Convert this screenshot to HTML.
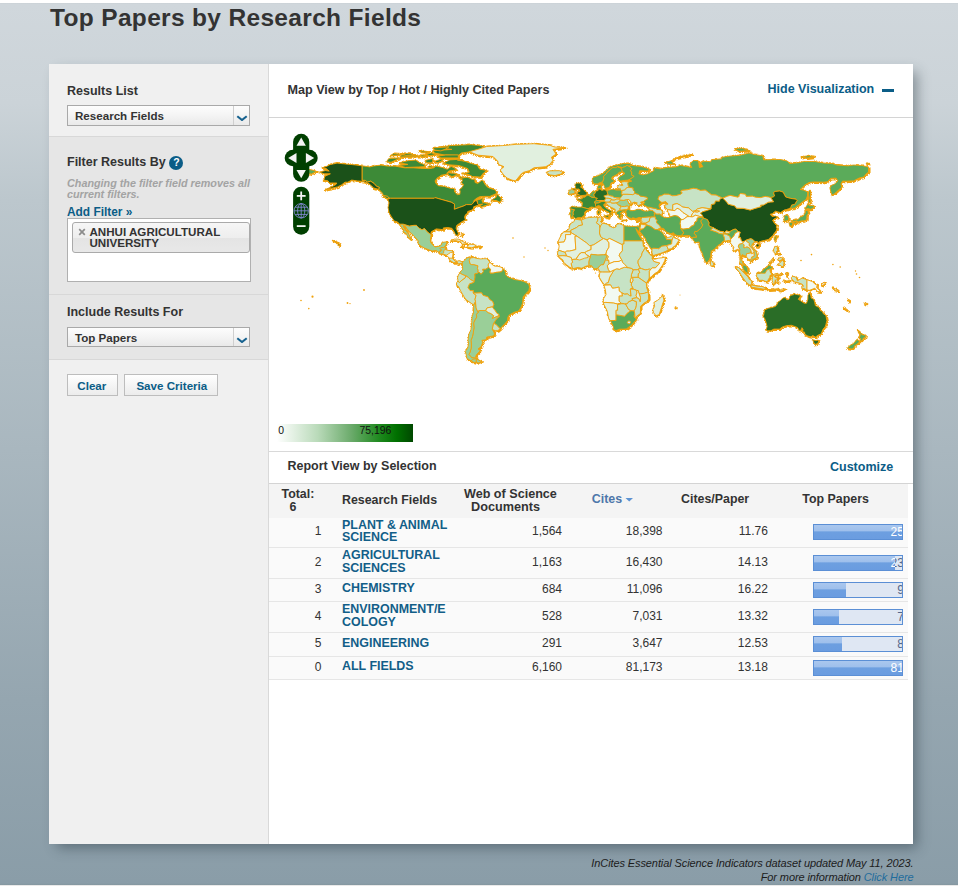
<!DOCTYPE html>
<html><head><meta charset="utf-8">
<style>
*{box-sizing:border-box;margin:0;padding:0}
html,body{width:958px;height:886px;overflow:hidden;background:#fff}
body{font-family:"Liberation Sans",sans-serif;color:#333;position:relative}
.t{position:absolute;white-space:nowrap}
.r{position:absolute}
</style></head><body>
<div class="r" style="left:0;top:3px;width:958px;height:882px;background:linear-gradient(to bottom,#c9d0d5 0px,#d0d7dc 1px,#cbd3d8 100px,#bcc7cd 197px,#a9b7bf 447px,#95a6b0 697px,#8a9da8 880px,#84979f 882px)"></div>
<div class="r" style="left:0;top:885px;width:958px;height:1px;background:#e9e9e9"></div>
<div class="t" style="left:50.00px;top:3.11px;font-size:24.5px;line-height:30px;font-weight:bold;color:#333;letter-spacing:0.33px">Top Papers by Research Fields</div>
<div class="r" style="left:49px;top:64px;width:864px;height:780px;background:#fff;box-shadow:6px 6px 12px -2px rgba(30,45,55,.42)"></div>
<div class="r" style="left:49px;top:64px;width:219px;height:780px;background:#f0f0f0"></div>
<div class="r" style="left:268px;top:64px;width:1px;height:780px;background:#d9d9d9"></div>
<div class="r" style="left:49px;top:136px;width:219px;height:1px;background:#d8d8d8"></div>
<div class="r" style="left:49px;top:137px;width:219px;height:157px;background:#e6e6e6"></div>
<div class="r" style="left:49px;top:294px;width:219px;height:1px;background:#d8d8d8"></div>
<div class="r" style="left:49px;top:295px;width:219px;height:64px;background:#e6e6e6"></div>
<div class="r" style="left:49px;top:359px;width:219px;height:1px;background:#d8d8d8"></div>
<div class="t" style="left:67.00px;top:82.67px;font-size:12.5px;line-height:16px;font-weight:bold;color:#333">Results List</div>
<div class="r" style="left:67px;top:105px;width:183px;height:21px;background:linear-gradient(#fdfdfd,#f4f4f4 50%,#e9e9e9);border:1px solid #a9a9a9"></div>
<div class="r" style="left:233px;top:106px;width:1px;height:19px;background:#cfcfcf"></div>
<svg class="r" style="left:236px;top:113.0px" width="12" height="8" viewBox="0 0 12 8"><path d="M1.3 3.2 L6 7 L10.7 3.2" fill="none" stroke="#17628f" stroke-width="2.1"/></svg>
<div class="t" style="left:75.00px;top:108.08px;font-size:11.6px;line-height:16px;font-weight:bold;color:#333">Research Fields</div>
<div class="t" style="left:67.00px;top:153.97px;font-size:12.5px;line-height:16px;font-weight:bold;color:#333">Filter Results By</div>
<div class="r" style="left:169px;top:156px;width:14px;height:14px;border-radius:50%;background:#0b5d87"></div>
<div class="t" style="left:173.20px;top:154.26px;font-size:10.5px;line-height:16px;font-weight:bold;color:#fff">?</div>
<div class="t" style="left:67.00px;top:175.06px;font-size:10.8px;line-height:16px;font-weight:bold;font-style:italic;color:#a3a3a3">Changing the filter field removes all</div>
<div class="t" style="left:67.00px;top:186.46px;font-size:10.8px;line-height:16px;font-weight:bold;font-style:italic;color:#a3a3a3">current filters.</div>
<div class="t" style="left:67.00px;top:204.28px;font-size:11.9px;line-height:16px;font-weight:bold;color:#0b5d87">Add Filter &raquo;</div>
<div class="r" style="left:67px;top:218px;width:184px;height:64px;background:#fff;border:1px solid #b0b0b0"></div>
<div class="r" style="left:72px;top:222px;width:178px;height:31px;background:linear-gradient(#f6f6f6,#eeeeee 50%,#e4e4e4 52%,#e8e8e8);border:1px solid #aaa;border-radius:3px"></div>
<svg class="r" style="left:78px;top:227.5px" width="8" height="8" viewBox="0 0 8 8"><path d="M1.2 1.2 L6.8 6.8 M6.8 1.2 L1.2 6.8" stroke="#8c8c8c" stroke-width="1.7"/></svg>
<div class="t" style="left:89.50px;top:223.68px;font-size:11.6px;line-height:16px;font-weight:bold;color:#333">ANHUI AGRICULTURAL</div>
<div class="t" style="left:89.50px;top:234.98px;font-size:11.6px;line-height:16px;font-weight:bold;color:#333">UNIVERSITY</div>
<div class="t" style="left:67.00px;top:304.47px;font-size:12.5px;line-height:16px;font-weight:bold;color:#333">Include Results For</div>
<div class="r" style="left:67px;top:327px;width:183px;height:20px;background:linear-gradient(#fdfdfd,#f4f4f4 50%,#e9e9e9);border:1px solid #a9a9a9"></div>
<div class="r" style="left:233px;top:328px;width:1px;height:18px;background:#cfcfcf"></div>
<svg class="r" style="left:236px;top:334.5px" width="12" height="8" viewBox="0 0 12 8"><path d="M1.3 3.2 L6 7 L10.7 3.2" fill="none" stroke="#17628f" stroke-width="2.1"/></svg>
<div class="t" style="left:75.00px;top:329.88px;font-size:11.6px;line-height:16px;font-weight:bold;color:#333">Top Papers</div>
<div class="r" style="left:67px;top:374px;width:51px;height:22px;background:linear-gradient(#ffffff,#f3f3f3 60%,#ececec);border:1px solid #bdbdbd"></div>
<div class="t" style="left:77.30px;top:377.68px;font-size:11.6px;line-height:16px;font-weight:bold;color:#0b5d87">Clear</div>
<div class="r" style="left:124px;top:374px;width:94px;height:22px;background:linear-gradient(#ffffff,#f3f3f3 60%,#ececec);border:1px solid #bdbdbd"></div>
<div class="t" style="left:136.40px;top:377.68px;font-size:11.6px;line-height:16px;font-weight:bold;color:#0b5d87">Save Criteria</div>
<div class="t" style="left:287.50px;top:81.63px;font-size:12.6px;line-height:16px;font-weight:bold;color:#333">Map View by Top / Hot / Highly Cited Papers</div>
<div class="t" style="left:767.50px;top:81.37px;font-size:12.5px;line-height:16px;font-weight:bold;color:#0b5d87">Hide Visualization</div>
<div class="r" style="left:882px;top:89.2px;width:12px;height:2.5px;background:#0b5d87"></div>
<div class="r" style="left:269px;top:117px;width:644px;height:1px;background:#d4d4d4"></div>
<svg class="r" style="left:269px;top:118px" width="644" height="333" viewBox="269 118 644 333">
<defs><filter id="jag" x="-2%" y="-2%" width="104%" height="104%"><feTurbulence type="turbulence" baseFrequency="0.9" numOctaves="2" seed="3"/><feDisplacementMap in="SourceGraphic" scale="2.2" xChannelSelector="R" yChannelSelector="G"/></filter></defs>
<path fill="#f0a20c" stroke="#f0a20c" stroke-width="2.0" stroke-linejoin="round" filter="url(#jag)" d="M362.0 165.8L369.9 166.9L373.8 165.9L380.9 165.1L388.0 166.1L395.1 166.1L404.6 167.8L413.3 167.8L420.4 168.3L429.1 168.6L433.8 167.8L435.9 165.9L442.5 167.5L447.2 169.2L451.2 166.4L455.1 168.3L456.2 169.9L448.8 171.0L446.4 174.3L441.4 175.2L437.0 178.2L435.1 180.9L435.7 183.0L438.2 185.7L444.2 186.4L450.4 188.3L454.6 188.7L454.6 192.0L457.3 194.6L459.8 194.3L460.2 191.2L459.5 189.6L462.0 187.5L463.6 184.7L461.4 182.8L462.4 180.4L461.1 177.3L467.7 177.3L472.1 179.3L474.8 179.3L475.1 182.5L477.7 183.4L481.6 180.4L482.9 180.6L484.8 184.1L487.5 187.2L491.4 188.8L494.1 189.4L496.0 191.0L496.6 193.4L494.2 194.5L489.8 196.4L483.5 196.4L479.6 196.7L475.6 198.9L473.4 201.4L482.7 198.3L483.2 199.1L481.9 200.2L482.7 202.5L487.5 203.5L489.8 203.0L488.2 204.6L481.1 207.0L480.0 205.5L482.7 204.1L478.8 204.6L477.5 203.5L477.2 201.0L475.3 200.8L474.0 201.9L471.7 204.6L466.3 204.6L463.8 205.9L459.8 207.3L454.3 209.3L454.5 204.1L451.2 202.2L443.1 199.9L434.9 197.6L434.3 198.3L390.4 198.3L388.0 197.5L387.2 196.7L383.3 195.6L382.5 193.2L379.4 189.9L378.4 189.3L379.4 187.4L376.5 186.3L374.0 183.4L370.7 181.2L367.5 182.2L365.2 180.4L362.0 180.4ZM490.9 200.5L496.1 197.2L496.9 194.2L500.9 197.8L501.3 200.5L499.6 201.9L496.1 200.5ZM487.0 170.5L483.5 173.0L480.4 177.1L472.5 176.5L467.7 174.0L462.2 173.5L469.3 172.2L467.7 168.6L463.8 167.2L458.9 165.5L448.8 164.8L443.3 163.2L449.6 159.9L458.3 159.3L463.8 160.9L471.7 163.6L477.2 165.0L479.6 169.1ZM424.3 166.7L418.8 167.0L405.4 167.5L398.6 165.5L407.8 164.4L399.1 162.8L407.8 160.7L415.7 160.1L419.6 162.8L425.1 164.8ZM484.3 146.2L470.9 144.6L450.4 145.6L437.7 147.5L442.5 148.4L451.9 149.4L433.0 150.6L434.6 153.1L444.1 154.9L458.3 155.4L461.4 153.0L471.4 151.6L480.4 149.0ZM400.2 157.9L391.0 162.3L386.5 161.7L388.8 158.4ZM458.3 157.9L440.9 157.9L437.7 156.1L445.6 155.0L458.3 154.9ZM420.4 156.5L399.9 156.9L401.5 154.9L417.2 155.4ZM431.4 158.8L425.1 160.4L426.7 162.8L432.2 162.8L433.0 160.1ZM442.5 158.8L434.6 161.2L437.0 162.8L441.7 161.2ZM458.3 174.9L453.5 173.3L447.2 172.7L448.8 175.2L451.9 176.5ZM429.1 151.7L418.8 150.5L422.0 152.2L427.0 152.8ZM414.1 154.7L409.3 153.3L401.5 153.6L406.2 155.4ZM386.5 198.3L389.6 199.2L387.6 196.2L382.5 195.4ZM448.8 147.0L433.0 147.8L434.6 150.1L440.9 150.9L445.6 149.0ZM433.0 166.4L429.1 165.8L428.3 167.3L431.4 167.8ZM398.3 154.9L390.4 155.5L393.6 153.5L400.7 154.1ZM457.5 160.2L463.8 161.0L461.4 159.5ZM436.2 154.4L429.9 155.7L425.9 154.4L431.4 152.8ZM425.1 155.4L420.4 154.7L422.0 156.8L426.7 156.5ZM465.4 177.4L458.3 176.8L460.6 178.4ZM387.7 199.2L390.4 198.3L434.3 198.3L434.9 197.6L443.1 199.9L451.2 202.2L454.5 204.1L454.3 209.3L459.8 207.3L463.8 205.9L466.3 204.6L471.7 204.6L474.0 201.9L475.3 200.8L477.2 201.0L477.5 203.5L478.8 204.9L473.7 206.8L473.1 209.3L471.0 210.4L467.7 211.5L467.4 213.3L465.4 214.8L464.6 217.2L465.4 219.9L461.6 221.9L456.7 225.4L456.1 228.3L458.3 233.3L457.6 235.8L455.4 234.6L454.2 231.7L451.9 228.3L448.0 227.6L443.3 227.9L443.4 229.8L440.9 229.4L436.2 228.9L431.1 231.9L431.1 234.7L427.5 232.2L424.5 228.6L422.0 229.8L419.3 228.3L416.4 225.4L413.8 225.4L409.3 226.2L403.3 224.3L399.7 224.3L397.5 221.9L394.2 221.0L391.2 216.4L389.1 212.8L388.5 209.5L388.0 207.7L389.0 202.7ZM362.0 165.8L362.0 180.4L365.2 180.4L367.5 182.2L370.7 181.2L374.0 183.4L376.5 186.3L379.4 187.4L378.4 189.3L373.8 188.0L369.1 183.8L363.6 181.4L357.3 180.9L351.7 180.1L347.8 182.2L345.0 182.2L341.5 184.9L337.5 186.9L330.4 188.5L326.5 189.3L324.9 189.8L332.0 186.6L336.0 184.4L336.8 183.0L329.0 183.0L328.1 180.9L323.8 180.1L324.9 176.2L330.4 173.8L324.1 173.8L319.4 172.1L325.4 170.5L329.2 171.1L326.2 168.6L321.8 167.8L326.0 166.7L329.7 164.7L337.1 163.1L344.6 163.9L354.1 164.8ZM338.5 243.7L340.2 244.8L338.8 245.8L338.2 244.5ZM337.5 242.6L336.3 242.1L334.9 241.5L332.8 240.6L335.2 242.0ZM469.3 151.7L480.4 148.6L486.7 146.5L502.4 145.6L516.6 144.3L534.0 143.7L549.8 145.3L554.5 147.0L565.6 147.5L552.9 149.4L556.1 154.1L551.4 157.2L552.9 160.4L549.8 164.4L545.8 166.7L534.0 167.8L529.3 170.7L523.7 172.2L521.4 173.8L517.4 178.6L515.4 180.9L511.9 180.1L507.2 178.1L504.0 175.4L501.7 172.2L500.1 169.9L504.0 166.7L498.5 164.4L497.7 161.2L493.0 156.5L478.0 155.2ZM546.6 172.2L549.8 170.8L559.3 170.7L561.6 171.8L563.0 172.9L560.8 174.1L555.0 175.6L549.8 174.9ZM399.7 224.3L403.3 224.3L409.3 226.2L413.8 225.4L416.4 225.4L419.3 228.3L422.0 229.8L424.5 228.6L427.5 232.2L431.1 234.7L430.3 240.9L431.1 243.3L433.8 245.9L435.4 246.9L439.3 246.2L441.7 244.4L441.8 242.5L447.1 241.7L446.4 244.0L445.2 246.4L443.9 247.5L441.1 247.5L440.3 248.5L441.7 250.2L439.0 251.6L439.0 252.7L436.2 250.4L432.2 251.0L429.1 249.9L424.3 248.0L420.4 245.8L418.0 243.3L418.3 241.0L416.4 238.7L413.3 235.4L409.3 231.6L406.7 228.4L405.4 226.2L403.3 225.4L403.3 226.7L405.4 230.0L407.3 232.5L408.9 234.6L410.4 237.6L411.1 239.5L407.8 236.8L406.2 233.5L402.9 231.7L404.3 230.3L401.5 227.5L400.5 225.3ZM439.0 252.7L441.7 250.2L440.3 248.5L441.1 247.5L443.9 247.5L445.2 246.4L445.3 249.6L448.8 250.5L451.9 250.7L453.2 252.1L452.7 255.9L452.4 258.2L453.5 259.8L455.9 261.7L459.0 260.6L462.4 261.9L462.4 263.6L460.9 263.3L458.3 264.1L457.6 262.5L453.7 262.7L449.3 260.0L449.3 258.1L446.4 255.2L443.7 254.3L440.3 253.7ZM446.4 255.2L448.8 253.7L450.4 252.6L453.2 252.1L452.7 255.9L452.4 258.2L449.3 258.1ZM439.0 252.7L441.7 250.2L440.3 248.5L441.1 247.5L443.9 247.5L445.2 246.4L445.3 249.6L443.7 250.5L443.7 252.9L442.3 254.0L440.3 253.7ZM450.4 241.0L454.3 239.1L458.3 239.1L462.7 241.5L467.4 243.7L461.9 244.2L460.6 241.7L455.4 240.6L451.9 241.0ZM466.9 246.6L469.6 244.2L474.0 244.5L476.7 246.2L474.0 246.9L471.7 247.8L467.1 247.0ZM460.9 246.6L464.1 246.9L463.0 247.5ZM478.5 246.4L481.0 246.6L480.4 247.2L478.5 247.2ZM461.4 233.3L463.0 233.8L462.2 236.2L460.9 235.4ZM462.4 265.2L462.4 263.6L462.4 261.9L464.6 260.6L465.4 258.9L467.4 257.8L470.6 257.0L472.0 256.0L471.0 257.5L470.3 258.1L469.3 260.6L470.1 263.8L471.7 264.6L473.9 264.6L478.0 265.8L477.4 268.5L478.3 270.2L477.5 271.5L478.8 272.1L477.8 273.2L474.8 273.9L475.0 277.2L474.0 282.2L473.7 281.3L470.3 279.4L468.4 277.5L465.7 275.8L463.0 274.8L460.5 273.5L459.5 273.4L460.5 271.7L462.7 269.3ZM470.3 258.1L471.5 257.8L474.0 257.5L476.7 258.4L480.4 258.9L483.5 258.7L486.7 258.7L488.2 260.0L489.8 262.2L488.7 263.8L488.2 264.9L488.6 267.4L485.6 269.3L482.7 269.3L483.5 271.7L481.1 274.3L478.8 272.1L477.5 271.5L478.3 270.2L477.4 268.5L478.0 265.8L473.9 264.6L471.7 264.6L470.1 263.8L469.3 260.6ZM489.8 262.2L492.2 264.6L494.6 266.1L497.7 266.3L500.1 266.8L502.4 268.0L503.1 269.0L501.7 271.7L499.3 272.1L496.1 272.4L493.0 273.2L490.1 273.2L489.8 272.0L490.6 269.3L488.6 267.4L488.2 264.9L488.7 263.8ZM467.9 287.4L470.1 290.6L473.3 290.6L473.1 293.0L476.1 293.1L481.5 292.8L483.0 295.3L488.2 296.9L489.5 299.4L492.5 301.3L493.8 304.3L492.7 307.6L495.3 310.8L496.9 313.3L498.8 314.3L499.3 316.6L496.6 318.8L493.6 323.3L496.1 324.5L500.1 328.8L502.1 326.4L504.8 323.7L507.5 320.6L507.8 317.4L509.1 315.1L514.3 312.2L518.5 311.1L520.6 307.9L522.6 303.2L523.1 296.9L525.8 293.7L528.8 290.6L529.6 287.0L528.5 283.8L523.7 281.4L519.0 280.2L514.3 279.5L508.0 276.9L505.6 274.8L505.6 272.8L504.0 269.3L503.1 269.0L501.7 271.7L499.3 272.1L496.1 272.4L493.0 273.2L490.1 273.2L489.8 272.0L490.6 269.3L488.6 267.4L485.6 269.3L482.7 269.3L483.5 271.7L481.1 274.3L478.8 272.1L477.8 273.2L474.8 273.9L475.0 277.2L474.0 282.2L469.5 283.8ZM457.5 278.0L458.3 275.1L459.5 273.4L460.5 273.5L463.0 274.8L465.7 275.8L465.2 278.0L460.9 281.0L459.4 282.7L457.9 281.0L457.9 279.5ZM456.4 285.1L456.7 282.4L457.9 281.0L459.4 282.7L460.9 281.0L465.2 278.0L465.7 275.8L468.4 277.5L470.3 279.4L473.7 281.3L474.0 282.2L469.5 283.8L467.9 287.4L470.1 290.6L473.3 290.6L473.1 293.0L476.1 295.3L475.0 299.3L475.5 301.2L473.7 304.8L471.8 303.7L466.1 299.7L464.1 296.9L460.6 290.9L458.6 286.6ZM476.1 293.1L481.5 292.8L483.0 295.3L488.2 296.9L489.5 299.4L492.5 301.3L493.8 304.3L492.7 306.8L487.1 307.9L485.7 310.6L479.9 310.5L477.5 311.6L475.9 307.9L475.5 301.2L475.0 299.3L476.1 295.3L473.1 293.0ZM492.7 306.8L492.7 307.6L495.3 310.8L496.9 313.3L498.8 314.3L498.3 316.0L492.2 318.5L493.6 315.7L490.6 313.5L488.2 312.8L485.7 310.6L487.1 307.9ZM493.6 323.3L496.1 324.5L500.1 328.8L497.7 330.7L495.3 330.7L492.3 329.4L492.7 326.9L493.3 323.7ZM479.9 310.5L485.7 310.6L488.2 312.8L490.6 313.5L493.6 315.7L492.2 318.5L498.3 316.0L499.3 316.6L496.6 318.8L493.6 323.3L493.3 323.7L492.7 326.9L492.3 329.4L493.9 332.1L494.6 334.0L493.4 335.9L486.7 337.1L486.2 339.7L481.9 340.3L482.7 342.3L481.1 346.6L478.0 349.0L480.4 350.6L476.4 354.7L475.6 357.0L476.6 358.3L471.7 357.7L470.4 356.1L468.8 354.5L470.1 352.1L471.2 348.2L471.4 345.0L471.0 340.3L472.5 336.4L473.3 332.4L474.0 327.7L473.6 322.9L475.0 319.8L476.7 317.1L476.4 314.3L478.5 311.9L477.5 311.6ZM476.2 358.6L481.8 361.9L478.3 362.9L476.2 362.2ZM473.7 304.8L475.5 303.2L475.9 307.9L477.5 311.6L478.5 311.9L476.4 314.3L476.7 317.1L475.0 319.8L473.6 322.9L474.0 327.7L473.3 332.4L472.5 336.4L471.0 340.3L471.4 345.0L471.2 348.2L470.1 352.1L468.8 354.5L470.4 356.1L471.7 357.7L476.6 358.3L473.3 360.0L470.9 360.8L466.9 358.4L466.1 354.5L465.4 351.3L467.7 348.2L468.5 343.5L468.0 340.3L468.7 334.5L470.9 329.6L471.7 322.9L472.0 316.6L473.4 312.7ZM476.2 362.2L474.0 362.4L470.9 360.8L473.3 359.2L476.2 358.6ZM592.4 178.6L592.4 180.9L593.2 182.8L594.8 183.9L597.4 183.9L600.3 182.5L601.5 182.2L602.3 182.7L603.4 180.1L603.9 178.6L603.6 176.2L606.4 173.8L607.4 171.9L609.0 171.0L610.5 169.1L612.9 167.5L615.9 167.7L617.6 166.7L619.8 167.2L622.4 167.5L625.1 166.7L627.1 165.3L629.5 166.7L630.3 165.6L633.4 165.5L629.5 163.6L623.2 163.4L617.6 164.8L612.9 165.9L609.0 167.5L607.4 169.1L605.0 171.5L603.8 173.0L601.1 174.1L597.9 175.7L593.2 177.4ZM602.3 182.7L603.4 184.1L604.5 186.6L604.9 188.2L607.1 188.0L609.7 186.9L610.5 184.9L610.9 183.1L613.7 182.0L614.2 180.4L611.6 178.9L612.1 177.0L615.0 175.6L617.6 174.1L619.2 172.2L622.7 171.8L621.7 169.9L621.6 168.3L617.6 166.7L615.9 167.7L612.9 167.5L610.5 169.1L609.0 171.0L607.4 171.9L606.4 173.8L603.6 176.2L603.9 178.6L603.4 180.1ZM622.7 171.8L624.6 172.9L624.4 174.1L622.1 175.2L619.2 176.8L618.3 178.7L618.4 180.1L620.8 181.1L624.7 180.4L628.4 180.1L631.1 178.6L634.2 176.3L631.5 174.9L631.8 172.9L630.7 170.2L632.0 168.8L629.8 166.9L629.9 165.5L629.5 166.7L627.1 165.3L625.1 166.7L622.4 167.5L619.8 167.2L617.6 166.7L621.6 168.3L621.7 169.9ZM597.3 188.0L598.1 185.5L601.1 184.5L601.1 186.4L601.5 187.2L600.1 188.8L599.3 189.1L598.1 189.0ZM575.5 196.7L579.8 195.8L586.6 195.0L587.2 192.4L585.0 191.3L583.7 189.6L582.0 187.9L580.6 187.2L581.7 184.9L579.5 183.1L576.6 183.1L574.7 184.9L575.7 186.8L575.0 187.7L576.6 189.1L579.0 189.0L579.8 190.5L579.8 191.5L577.4 191.7L577.9 192.9L576.3 193.9L579.3 194.5L577.4 195.0ZM575.0 190.2L575.8 189.4L574.9 188.5L573.0 188.7L572.2 189.8L573.5 190.1ZM575.0 193.2L574.7 191.2L575.0 190.2L573.5 190.1L572.2 189.8L573.0 188.7L571.4 188.5L570.8 190.1L568.7 190.1L569.0 191.5L568.4 193.4L569.5 194.2L571.9 193.9ZM577.1 198.9L582.1 198.8L582.6 197.2L584.8 197.2L587.0 195.3L588.4 195.0L591.1 196.9L593.7 197.5L594.6 197.5L597.4 198.3L596.3 200.5L594.0 202.5L595.5 203.2L595.5 205.9L596.3 206.5L594.8 207.6L591.6 207.0L589.4 207.7L589.5 208.7L586.9 208.5L581.7 207.1L582.6 203.0L581.0 201.3L577.4 200.0ZM598.1 207.9L599.5 208.1L599.2 210.3L598.2 209.5ZM569.8 207.7L571.9 206.6L577.4 207.1L581.7 207.1L586.9 208.5L589.5 208.7L589.5 209.5L585.8 210.9L584.5 212.6L584.8 214.4L583.4 216.3L581.2 217.7L577.6 217.7L575.7 218.8L574.2 217.4L572.8 216.9L572.7 215.3L573.5 214.1L572.7 213.1L573.6 210.9L574.4 209.8L571.6 209.2L570.5 209.3ZM570.5 209.3L571.6 209.2L574.4 209.8L573.6 210.9L572.7 213.1L573.5 214.1L572.7 215.3L572.8 216.9L570.5 217.2L570.6 214.5L569.5 214.4L570.6 211.5ZM588.4 195.0L589.9 194.5L591.3 193.2L591.9 192.0L593.2 191.3L595.5 191.2L595.2 193.2L593.8 193.9L594.1 195.4L594.6 197.5L593.7 197.5L591.1 196.9ZM595.5 191.2L598.1 190.5L598.1 189.0L600.1 189.1L601.9 190.4L604.2 189.6L606.9 190.5L607.2 191.7L607.5 193.1L607.7 193.9L608.2 195.0L607.1 195.1L603.9 196.2L606.3 198.3L605.0 199.4L604.7 200.5L601.1 200.6L599.6 200.6L596.5 200.5L596.3 199.5L597.4 198.3L594.6 197.5L594.1 195.4L593.8 193.9L595.2 193.2ZM606.9 190.5L610.5 189.6L613.7 189.1L615.7 189.8L620.5 189.8L621.6 190.5L622.2 192.4L621.1 193.1L622.4 195.4L621.6 196.4L620.2 198.1L615.3 197.5L614.2 197.5L612.4 196.2L611.0 196.1L608.2 195.0L607.7 193.9L607.5 193.1L607.2 191.7ZM603.9 196.2L607.1 195.1L608.2 195.0L611.0 196.1L612.4 196.2L614.2 197.5L615.3 197.5L620.2 198.1L619.4 199.2L616.8 199.1L614.2 200.2L611.5 199.9L611.2 198.9L608.2 198.3L606.3 198.3ZM599.6 200.6L601.1 200.6L604.7 200.5L605.0 199.4L606.3 198.3L608.2 198.3L611.2 198.9L611.5 199.9L609.9 201.4L610.5 202.2L606.0 202.2L603.8 201.4L601.1 201.7L599.5 201.3ZM594.0 202.5L596.3 200.5L599.6 200.6L599.5 201.3L601.1 201.7L598.7 203.0L595.5 203.2ZM609.9 201.4L610.5 202.2L611.8 203.2L614.2 203.2L616.5 202.9L618.4 202.1L620.6 200.0L619.4 199.2L616.8 199.1L614.2 200.2L611.5 199.9ZM596.3 206.5L598.4 205.5L600.6 206.3L601.9 208.5L604.2 210.1L606.6 211.2L609.1 212.5L610.1 214.2L609.1 215.6L609.9 215.6L611.5 214.1L610.5 213.0L611.3 211.7L613.7 212.2L609.7 210.1L606.6 208.4L603.9 205.9L603.9 204.1L606.1 203.5L606.0 202.2L603.8 201.4L601.1 201.7L598.7 203.0L595.5 203.2L595.5 205.9ZM604.1 215.6L609.1 215.2L608.3 217.7L604.1 216.3ZM597.8 214.1L597.4 210.9L600.0 210.9L599.6 213.9ZM606.1 203.5L606.0 202.2L610.5 202.2L611.8 203.2L614.2 203.2L616.5 202.9L618.3 204.9L619.2 205.4L619.8 205.4L620.8 207.4L619.8 208.9L620.6 210.4L617.6 211.2L616.1 213.1L615.0 211.7L615.3 209.6L613.7 208.5L611.3 207.4L608.5 205.7L607.4 204.3ZM616.5 202.9L618.4 202.1L620.6 200.0L623.8 200.3L626.5 199.5L627.9 201.0L629.0 203.8L631.2 204.1L629.8 205.7L628.7 206.5L627.1 206.0L624.7 206.6L621.6 206.5L619.8 205.4L619.2 205.4L618.3 204.9ZM626.5 199.5L629.0 199.5L631.4 202.4L629.0 203.8L627.9 201.0ZM619.8 205.4L621.6 206.5L624.7 206.6L627.1 206.0L628.7 206.5L627.9 208.5L628.7 209.3L625.8 209.8L622.4 210.1L620.6 210.4L619.8 208.9L620.8 207.4ZM616.1 213.1L617.6 211.2L620.6 210.4L622.4 210.1L625.8 209.8L626.0 211.2L622.4 211.2L621.3 212.5L620.2 213.1L621.3 214.1L622.4 215.5L620.0 215.3L621.1 216.7L619.5 218.0L618.4 217.2L618.0 216.0L618.9 215.2L617.3 214.4L616.4 213.3ZM621.6 219.9L626.0 220.1L622.4 220.4ZM620.2 198.1L621.6 196.4L622.4 195.4L622.4 194.2L627.1 194.2L632.6 194.6L635.0 193.4L638.2 194.3L640.5 196.1L644.5 196.7L647.1 197.3L647.6 199.1L644.9 200.5L643.7 201.4L640.5 202.2L642.1 204.0L638.2 205.5L635.8 204.0L637.4 203.0L634.2 202.1L631.8 203.3L631.2 204.1L629.0 203.8L631.4 202.4L629.0 199.5L626.5 199.5L623.8 200.3L620.6 200.0L619.4 199.2ZM621.1 193.1L622.2 192.4L621.6 190.5L624.7 189.9L626.5 187.7L629.0 187.1L633.1 187.9L633.4 190.4L635.0 191.7L634.7 192.3L635.0 193.4L632.6 194.6L627.1 194.2L622.4 194.2ZM617.6 187.7L618.0 186.0L619.2 184.7L621.3 185.5L623.0 185.2L621.6 183.3L621.4 182.0L624.7 181.6L628.7 181.9L627.9 183.3L628.2 185.2L629.0 187.1L626.5 187.7L624.7 189.9L621.6 190.5L620.5 189.8L618.1 188.5ZM626.5 210.0L628.7 209.3L630.3 210.6L633.9 210.6L637.4 209.3L640.0 209.3L643.7 210.9L647.6 211.1L650.0 210.1L653.0 210.7L655.2 213.0L654.1 213.4L654.7 215.2L654.2 215.8L655.2 216.9L651.4 217.1L648.7 217.1L644.8 217.4L642.3 217.5L641.2 218.9L641.6 217.8L639.1 217.5L635.8 218.6L632.8 217.7L631.4 218.5L628.7 217.7L627.6 216.7L626.0 215.2L626.6 213.3L625.8 212.2L626.0 211.2ZM635.5 220.2L638.9 219.4L638.0 220.5L636.3 221.0ZM647.6 207.1L650.0 207.3L653.1 208.1L655.5 208.4L657.9 209.5L661.0 209.6L662.6 212.0L661.7 214.8L660.9 215.5L660.2 214.1L657.9 214.2L656.3 214.1L655.2 213.0L653.0 210.7L650.0 210.1ZM643.7 201.4L644.9 200.5L647.6 199.1L647.1 197.3L644.5 196.7L640.5 196.1L638.2 194.3L635.0 193.4L634.7 192.3L635.0 191.7L633.4 190.4L633.1 187.9L629.0 187.1L628.2 185.2L627.9 183.3L628.7 181.9L631.8 181.1L628.4 180.1L631.1 178.6L634.2 176.3L631.5 174.9L631.8 172.9L630.7 170.2L632.0 168.8L629.8 166.9L629.9 165.5L633.1 165.5L636.6 166.1L642.1 166.7L649.2 168.9L648.4 171.0L639.7 170.7L638.9 173.8L642.9 174.9L647.6 173.8L653.9 170.7L653.9 167.7L660.2 168.8L668.1 167.3L676.0 166.9L680.0 165.3L691.8 167.5L689.9 163.9L693.4 160.4L698.1 160.7L698.9 163.6L699.4 167.5L702.9 166.7L700.5 162.8L703.6 161.2L710.7 161.7L711.5 159.6L721.8 158.8L721.0 157.4L729.7 156.1L739.1 155.4L749.1 153.0L754.1 154.4L762.8 155.8L763.6 159.8L771.5 159.6L780.2 159.5L787.3 161.0L789.6 163.6L799.1 162.6L803.8 161.4L814.9 161.5L822.8 162.9L832.2 163.6L837.0 165.1L848.0 165.8L853.5 165.0L862.2 165.5L868.5 167.0L868.5 172.2L866.2 173.8L863.8 177.0L859.1 178.1L853.5 180.9L846.4 181.2L842.5 181.1L840.9 184.1L841.7 187.1L839.8 189.0L836.7 191.7L834.3 193.9L831.8 195.1L830.7 191.2L829.9 188.0L831.6 185.2L834.6 184.1L837.8 180.9L836.2 178.2L830.7 178.4L827.5 181.7L823.6 182.2L818.0 182.0L813.3 182.0L808.9 182.5L804.6 185.2L800.2 189.4L803.8 190.2L807.6 192.0L807.5 195.9L806.2 199.4L803.1 201.4L799.1 204.6L794.7 208.1L791.2 208.4L790.7 208.9L790.6 207.7L791.7 204.9L794.7 204.4L797.1 200.3L796.0 199.2L790.7 198.4L785.7 197.0L783.0 192.0L779.4 191.0L775.1 191.5L773.5 192.6L774.6 195.9L773.2 197.0L770.5 197.5L768.7 197.0L765.2 196.4L760.8 197.6L755.7 197.3L752.6 196.2L746.2 196.4L745.5 194.3L740.7 193.5L738.8 195.1L739.5 196.1L737.9 197.2L730.1 195.4L727.6 196.2L723.0 198.0L722.3 198.1L717.8 195.9L716.1 195.1L711.5 194.8L707.3 191.5L705.2 190.1L700.5 190.4L696.5 188.7L693.1 188.3L687.4 189.8L681.5 190.4L680.8 192.0L682.3 192.8L680.8 194.2L676.0 195.6L672.4 195.8L668.9 194.3L664.2 194.2L661.3 195.8L659.1 196.2L658.0 199.1L658.8 200.0L661.0 202.1L662.1 202.4L659.5 203.8L659.0 205.9L659.6 207.7L661.0 209.6L657.9 209.5L655.5 208.4L653.1 208.1L650.0 207.3L647.6 207.1L644.5 205.4L642.9 204.3L644.8 202.7ZM808.6 203.0L810.9 201.7L809.7 198.3L810.5 194.0L810.2 191.2L809.7 189.9L808.7 191.5L808.3 195.1L808.7 199.9L808.3 202.2ZM665.0 162.8L668.1 163.9L674.4 164.2L671.3 161.2L674.4 158.8L682.3 156.0L692.6 154.3L688.6 155.4L676.0 158.0L672.1 160.4L667.3 162.0ZM734.4 148.6L739.1 151.3L749.4 150.6L741.5 148.1ZM800.7 156.9L807.0 158.0L814.9 156.9L808.6 155.7ZM866.5 162.8L868.5 163.2L868.5 163.9L866.2 163.9ZM300.5 167.0L306.8 169.1L313.1 170.2L316.7 171.5L314.7 172.2L311.5 174.1L306.8 173.0L300.5 172.2ZM300.5 163.2L305.2 162.9L302.8 163.9L300.5 163.9ZM616.1 189.0L620.5 188.8L620.5 189.8L615.7 189.8ZM722.3 198.1L719.4 201.4L715.5 201.1L714.7 204.0L711.4 204.6L711.1 209.0L710.7 208.9L702.1 207.7L697.3 209.0L695.0 210.9L692.6 211.4L688.6 207.9L682.3 207.0L680.8 205.5L677.0 203.6L672.9 204.6L672.7 210.4L667.8 209.5L667.3 209.6L665.5 207.4L664.2 205.5L668.1 204.1L665.8 201.6L662.1 202.4L661.0 202.1L658.8 200.0L658.0 199.1L659.1 196.2L661.3 195.8L664.2 194.2L668.9 194.3L672.4 195.8L676.0 195.6L680.8 194.2L682.3 192.8L680.8 192.0L681.5 190.4L687.4 189.8L693.1 188.3L696.5 188.7L700.5 190.4L705.2 190.1L707.3 191.5L711.5 194.8L716.1 195.1L717.8 195.9ZM667.3 209.6L672.7 210.4L674.8 210.6L677.0 208.2L679.2 209.0L681.2 210.6L683.0 212.5L685.8 214.2L689.4 216.6L687.1 216.7L683.1 219.6L681.1 219.4L680.0 218.0L677.6 216.3L674.9 215.6L671.0 216.6L669.6 217.4L669.6 214.2L668.1 212.5ZM672.7 210.4L672.9 204.6L677.0 203.6L680.8 205.5L682.3 207.0L688.6 207.9L692.6 211.4L695.0 210.9L697.3 210.6L699.7 211.1L697.3 212.2L694.2 211.8L692.6 213.3L691.0 216.7L689.4 216.6L685.8 214.2L683.0 212.5L681.2 210.6L679.2 209.0L677.0 208.2L674.8 210.6ZM692.6 213.3L694.2 211.8L697.3 212.2L699.7 211.1L697.3 210.6L695.0 210.9L697.3 209.0L702.1 207.7L710.7 208.9L711.1 209.0L708.4 210.0L705.7 210.9L702.9 211.7L700.5 213.3L702.1 214.7L703.2 217.2L702.2 217.2L697.3 215.8L695.7 215.2L692.3 216.9L691.0 216.7ZM680.6 228.6L683.1 229.2L689.3 228.4L691.0 226.4L693.9 225.3L695.0 221.9L696.9 221.2L697.3 218.0L699.7 217.5L702.2 217.2L697.3 215.8L695.7 215.2L692.3 216.9L689.4 216.6L687.1 216.7L683.1 219.6L681.1 219.4L680.4 221.5L680.0 223.5L680.6 225.9ZM681.7 235.8L689.4 235.5L692.1 238.2L693.1 237.4L696.5 237.3L696.1 235.2L694.2 233.6L695.0 231.4L697.0 231.6L701.0 228.1L701.9 226.7L702.9 224.6L702.1 224.3L701.0 221.6L701.3 220.4L703.6 218.0L702.2 217.2L699.7 217.5L697.3 218.0L696.9 221.2L695.0 221.9L693.9 225.3L691.0 226.4L689.3 228.4L683.1 229.2L680.6 228.6L682.3 230.8L683.9 233.0L682.0 234.3ZM654.1 213.4L656.3 214.1L657.9 214.2L660.2 214.1L660.9 215.5L661.8 216.1L665.0 217.7L669.6 217.4L671.0 216.6L674.9 215.6L677.6 216.3L680.0 218.0L681.1 219.4L680.4 221.5L680.0 223.5L680.6 225.9L680.6 228.6L682.3 230.8L683.9 233.0L682.0 234.3L681.7 235.8L677.6 235.5L674.9 234.7L673.5 232.8L670.8 233.8L667.5 232.4L665.8 231.6L663.6 228.4L661.2 228.3L659.8 226.1L658.7 224.6L657.1 223.5L656.3 221.9L657.1 220.2L655.5 219.1L655.2 216.9L654.2 215.8L654.7 215.2ZM645.7 222.9L649.2 221.3L649.7 218.2L651.4 217.1L655.2 216.9L655.5 219.1L657.1 220.2L656.3 221.9L657.1 223.5L658.7 224.6L659.8 226.1L661.2 228.3L660.1 228.3L658.8 228.4L657.9 229.7L655.0 229.5L650.8 226.5L646.4 224.8ZM642.1 229.0L643.7 228.3L644.5 227.5L646.4 224.8L650.8 226.5L655.0 229.5L657.9 229.7L659.5 230.6L661.0 231.6L662.8 233.2L663.7 234.6L664.7 236.5L665.9 237.4L666.6 239.3L672.1 239.8L671.6 244.0L666.6 245.6L661.8 246.2L658.7 248.8L657.6 248.5L652.7 248.3L652.0 249.6L650.0 247.2L648.4 244.7L646.4 241.7L645.3 238.0L643.5 236.3L641.3 233.3L639.7 231.3L639.1 231.3ZM652.0 249.6L652.7 248.3L657.6 248.5L658.7 248.8L661.8 246.2L666.6 245.6L668.3 249.2L666.6 251.0L662.6 252.6L660.2 253.5L656.3 254.6L653.1 255.6L651.9 252.7ZM666.6 245.6L671.6 244.0L672.1 239.8L672.9 237.6L673.5 236.3L674.4 237.9L677.3 238.7L678.9 240.3L676.8 243.4L675.6 245.6L673.8 246.6L671.3 248.8L668.3 249.2ZM665.9 237.4L666.6 239.3L672.1 239.8L672.9 237.6L673.5 236.3L672.9 234.6L671.3 236.5L668.1 237.4ZM641.2 218.9L642.3 217.5L644.8 217.4L648.7 217.1L651.4 217.1L649.7 218.2L649.2 221.3L645.7 222.9L641.3 223.1L640.7 221.5ZM639.7 229.0L640.5 224.5L640.7 224.0L642.6 224.6L646.4 224.8L644.5 227.5L643.7 228.3L642.1 229.0ZM638.5 226.2L639.7 229.0L640.5 224.5L640.7 223.1L639.9 223.4L638.9 225.9ZM639.9 223.4L640.7 223.1L642.3 221.6L641.2 220.8ZM700.5 213.3L702.9 211.7L705.7 210.9L708.4 210.0L711.1 209.0L711.4 204.6L714.7 204.0L715.5 201.1L719.4 201.3L719.9 199.2L722.3 198.1L724.6 199.7L727.3 202.7L727.9 204.1L734.9 205.9L736.5 208.2L743.6 208.4L750.2 210.0L754.1 208.7L761.1 206.6L760.4 205.2L763.6 204.9L768.3 202.2L770.7 201.9L773.5 201.7L770.5 197.5L773.2 197.0L774.6 195.9L773.5 192.6L775.1 191.5L779.4 191.0L783.0 192.0L785.7 197.0L790.7 198.4L796.0 199.2L797.1 200.3L794.7 204.4L791.7 204.9L790.6 207.7L788.9 208.7L786.5 209.5L784.1 210.1L780.6 212.6L777.3 211.7L775.4 211.2L772.3 213.7L770.2 214.2L772.0 216.4L775.4 216.0L777.8 217.2L774.3 218.8L772.6 220.4L774.6 223.5L776.9 225.6L776.2 227.0L777.0 228.6L776.2 230.9L773.9 233.8L772.8 235.8L769.9 238.0L768.3 239.5L764.7 240.4L761.2 241.2L758.9 242.1L758.4 243.6L757.4 241.5L754.9 241.7L752.9 239.6L750.7 238.7L747.0 239.9L745.8 240.3L744.8 242.1L744.0 241.5L742.6 241.7L741.2 240.7L740.4 237.6L738.5 237.9L739.6 233.8L740.2 232.2L738.0 231.6L736.0 229.2L733.8 229.4L729.7 231.7L726.2 231.1L724.6 232.5L723.4 231.6L720.2 231.4L716.3 229.5L713.1 227.6L710.0 226.7L708.7 225.1L709.0 222.7L707.3 219.6L704.7 219.1L703.2 217.2L702.1 214.7ZM755.9 245.3L757.4 243.9L759.7 244.5L758.9 246.2L757.3 246.9L756.0 246.4ZM774.0 239.3L775.4 236.0L777.0 236.2L775.1 240.9ZM723.0 198.0L727.6 196.2L730.1 195.4L737.9 197.2L739.5 196.1L738.8 195.1L740.7 193.5L745.5 194.3L746.2 196.4L752.6 196.2L755.7 197.3L760.8 197.6L765.2 196.4L768.7 197.0L770.5 197.5L773.5 201.7L770.7 201.9L768.3 202.2L763.6 204.9L760.4 205.2L761.1 206.6L754.1 208.7L750.2 210.0L743.6 208.4L736.5 208.2L734.9 205.9L727.9 204.1L727.3 202.7L724.6 199.7ZM692.1 238.2L695.0 242.5L699.1 242.0L699.5 245.6L700.2 249.6L702.1 252.7L703.6 257.5L704.9 260.6L706.8 262.8L707.9 261.6L709.6 259.3L710.6 256.7L711.2 251.1L714.2 249.4L717.8 245.6L721.5 243.3L722.6 241.4L724.6 240.9L724.3 237.3L723.4 235.4L724.0 233.8L726.2 234.3L729.7 236.2L730.6 239.5L731.9 237.9L733.8 236.2L734.9 233.6L738.0 231.6L736.0 229.2L733.8 229.4L729.7 231.7L726.2 231.1L724.6 232.5L723.5 233.9L719.4 233.5L717.1 232.2L712.3 230.5L710.7 230.2L713.1 227.6L710.0 226.7L708.7 225.1L709.0 222.7L707.3 219.6L703.6 218.0L701.3 220.4L701.0 221.6L702.1 224.3L702.9 224.6L701.9 226.7L701.0 228.1L697.0 231.6L695.0 231.4L694.2 233.6L696.1 235.2L696.5 237.3L693.1 237.4ZM710.7 230.2L712.3 230.5L717.1 232.2L719.4 233.5L723.5 233.9L723.4 231.6L720.2 231.4L716.3 229.5L713.1 227.6ZM724.6 232.5L726.2 233.3L729.7 233.2L729.7 231.7L726.2 231.1ZM724.6 240.9L725.7 241.0L729.4 240.4L730.6 242.0L730.6 239.5L729.7 236.2L726.2 234.3L724.0 233.8L723.4 235.4L724.3 237.3ZM710.4 263.0L710.7 260.1L712.8 262.2L713.7 264.2L713.1 265.8L711.5 266.3L710.6 264.9ZM730.0 242.5L730.6 242.0L730.6 239.5L731.9 237.9L733.8 236.2L734.9 233.6L738.0 231.6L740.2 232.2L739.6 233.8L738.5 237.9L740.4 237.6L741.2 240.7L742.6 241.7L744.0 241.5L742.5 243.4L739.1 244.4L738.4 246.4L739.9 249.6L739.5 251.9L740.1 254.3L740.9 255.9L740.1 259.8L739.8 256.7L738.8 249.9L738.0 249.2L734.4 250.7L733.1 250.4L733.8 247.2L732.0 245.0ZM739.1 244.4L742.5 243.4L744.2 244.8L743.9 247.8L745.5 247.4L747.0 246.7L749.7 248.1L751.1 251.0L750.5 253.0L746.6 253.8L746.2 256.3L743.9 255.6L742.3 254.5L741.0 257.5L741.5 259.5L742.9 263.8L745.3 265.3L743.2 265.3L739.6 262.8L740.1 259.8L740.9 255.9L740.1 254.3L739.5 251.9L739.9 249.6L738.4 246.4ZM742.5 243.4L744.0 241.5L745.8 240.3L746.6 241.4L748.6 242.5L749.4 243.7L749.2 245.5L752.6 248.8L754.1 251.1L754.1 252.7L751.6 253.7L751.1 251.0L749.7 248.1L747.0 246.7L745.5 247.4L743.9 247.8L744.2 244.8ZM745.8 240.3L747.0 239.9L750.7 238.7L752.9 239.6L754.9 241.7L752.9 243.3L751.5 245.6L752.6 247.5L754.1 249.7L756.2 251.6L757.0 255.1L756.8 257.3L754.9 258.6L752.9 259.3L750.2 262.0L749.9 259.5L751.8 258.7L751.6 257.0L754.1 256.2L754.1 252.7L754.1 251.1L752.6 248.8L749.2 245.5L749.4 243.7L748.6 242.5L746.6 241.4ZM746.6 253.8L746.2 256.3L747.8 259.0L749.9 259.5L751.8 258.7L751.6 257.0L754.1 256.2L754.1 252.7L751.6 253.7L750.5 253.0ZM743.2 265.3L745.3 265.3L745.6 265.8L747.7 268.0L747.8 271.7L748.9 273.4L747.8 273.5L744.4 271.0L742.9 268.2L742.5 265.5ZM756.5 276.4L756.8 273.5L757.4 272.4L759.7 273.1L762.8 270.6L764.4 268.5L766.8 267.4L768.8 264.7L770.2 266.0L772.3 267.4L771.0 268.8L769.9 270.1L770.5 272.8L772.3 274.2L769.9 275.6L769.9 277.2L768.3 279.5L767.5 281.8L765.2 281.3L762.8 280.3L760.4 280.3L758.4 280.2L758.1 278.0ZM757.4 272.4L759.7 273.1L762.8 270.6L764.4 268.5L766.8 267.4L768.8 264.7L770.2 266.0L772.3 267.4L771.0 268.8L769.9 269.0L766.8 270.1L765.2 273.2L761.2 273.2L757.4 273.7ZM734.9 266.9L738.4 267.4L742.8 271.7L748.1 277.0L749.4 279.5L751.8 280.6L751.5 284.8L749.4 284.9L745.9 281.9L743.7 278.8L741.0 275.1L739.9 272.9L737.6 270.1ZM750.5 286.3L751.8 285.1L755.7 285.9L758.9 286.5L762.0 286.5L765.3 287.8L765.0 289.3L759.7 288.5L756.0 287.9L752.4 287.3ZM772.0 280.3L772.6 276.4L773.9 274.5L775.3 273.5L779.4 274.2L781.8 273.2L781.0 275.0L775.4 274.8L774.2 276.4L775.6 277.5L778.9 277.2L776.7 278.8L777.5 281.1L778.6 283.0L776.2 282.4L775.3 279.7L774.5 284.4L773.1 284.3L772.9 282.2ZM766.0 288.5L767.5 289.6L770.7 289.5L772.3 289.2L775.4 288.9L778.6 288.7L778.6 289.2L773.9 289.8L769.1 290.0ZM785.7 272.8L786.5 274.8L787.3 276.9L786.8 274.3L787.4 272.4ZM783.3 280.5L785.2 280.8L786.8 281.1L784.6 281.8ZM788.9 280.0L790.9 280.6L790.1 281.3L787.3 281.1ZM791.2 277.8L792.8 276.2L796.0 277.2L797.5 280.8L802.1 278.0L807.0 279.7L807.0 290.0L803.8 288.4L802.3 288.9L801.6 287.3L803.5 286.3L802.3 284.3L797.5 282.4L794.4 281.9L792.8 280.0L791.5 278.8ZM807.0 279.7L812.5 281.6L814.9 284.1L817.3 285.1L816.5 287.4L818.8 289.8L821.2 291.9L817.3 291.5L814.9 288.2L810.9 289.8L809.4 290.3L807.0 290.0ZM821.2 284.3L824.4 282.2L825.1 283.5L822.8 285.4ZM780.2 290.3L781.9 289.0L785.4 288.9L781.8 290.6L780.2 291.5ZM774.8 246.4L777.5 246.4L777.0 248.8L777.8 250.0L776.2 251.9L777.0 253.5L780.2 253.7L778.6 255.1L776.5 253.7L775.0 253.7L773.9 251.9L773.5 249.9ZM777.0 264.6L779.4 263.3L782.5 260.1L784.0 262.2L783.6 265.7L782.2 266.8L780.2 265.3ZM777.8 259.0L780.2 257.5L782.9 257.9L781.8 259.8L779.4 260.6L777.8 260.1ZM769.4 262.3L773.1 257.9L773.4 259.0L769.9 263.0ZM791.1 221.5L793.6 219.7L798.3 219.3L800.4 216.7L803.1 216.0L805.4 212.8L805.4 210.6L807.8 210.4L808.4 213.3L807.0 215.3L806.8 217.4L806.7 219.4L805.1 220.5L803.5 220.8L800.7 221.0L797.8 222.3L797.1 220.8L794.4 221.3L792.0 221.9ZM789.0 222.9L791.2 222.1L792.8 223.5L791.7 226.1L790.0 226.2L789.3 224.3ZM793.7 222.1L797.1 221.8L796.4 223.2L794.4 223.8ZM805.4 210.1L805.1 208.4L807.8 204.1L809.4 205.5L813.8 205.7L814.1 207.4L810.9 209.3L807.0 208.5ZM783.5 216.1L787.1 214.7L788.7 217.2L788.7 219.6L788.1 220.4L785.7 221.0L783.8 221.3L784.1 218.8L784.3 216.9ZM763.1 316.6L763.8 314.3L764.5 310.0L768.7 308.1L771.5 307.6L775.4 306.4L777.3 304.0L777.8 302.1L779.5 301.2L781.0 299.7L783.6 297.7L785.7 297.7L786.8 299.7L788.9 299.3L789.8 296.4L790.9 295.2L793.7 294.7L793.7 293.4L796.0 294.4L799.0 294.9L800.5 295.0L800.1 296.4L798.3 299.3L800.7 300.8L804.2 303.2L806.5 303.2L807.8 299.3L807.9 295.5L809.4 292.5L810.9 296.0L811.1 298.0L813.8 299.3L814.7 302.4L815.4 305.6L819.3 307.6L820.4 310.8L822.5 311.3L823.1 313.5L825.9 315.5L826.9 320.6L825.9 324.5L825.1 326.9L823.1 329.1L821.2 334.0L818.0 335.2L815.4 337.1L812.8 335.6L810.9 336.8L807.8 336.0L804.9 334.3L804.6 332.1L802.4 331.8L803.1 329.6L801.9 327.7L801.5 330.0L799.0 330.4L797.7 327.7L796.0 326.9L791.5 325.3L786.8 325.6L782.5 326.9L779.5 329.1L773.9 329.1L770.7 330.8L767.5 330.8L766.0 329.6L767.1 326.6L766.0 322.2L764.5 318.2ZM812.7 339.8L815.7 340.5L818.5 340.1L818.5 342.2L816.8 343.8L814.9 344.4L813.6 342.2ZM857.0 329.9L859.5 331.9L861.4 333.7L862.2 334.9L865.9 334.9L865.2 337.5L863.6 337.9L862.5 339.7L861.0 341.2L860.0 340.8L860.7 338.6L858.8 337.5L860.0 336.4L860.2 334.1L858.3 331.6ZM856.9 339.5L859.5 341.1L858.8 342.5L857.0 344.4L854.7 345.7L854.0 348.0L852.1 349.1L847.2 348.2L850.2 345.3L853.5 343.5L855.6 341.1ZM843.3 307.5L848.0 310.8L847.2 310.6L843.8 308.1ZM864.3 303.2L866.2 302.9L866.2 304.3L864.3 304.2ZM832.2 287.4L837.0 289.5L838.6 291.1L835.4 290.6ZM848.0 299.3L849.3 300.1L848.8 301.6ZM575.2 219.1L581.3 220.2L581.8 221.5L582.6 224.9L578.8 225.7L576.6 227.5L570.8 230.3L570.8 231.9L563.7 231.9L566.4 230.9L569.0 228.9L569.4 226.1L570.9 223.2L573.8 221.8ZM570.8 231.9L570.8 234.6L565.6 234.6L565.6 238.5L564.0 242.0L557.7 242.5L559.7 237.9L561.6 234.4L563.7 231.9ZM581.3 220.2L586.1 218.0L589.2 217.5L594.8 217.1L598.1 217.4L597.6 221.0L596.3 222.7L599.5 225.1L600.0 227.8L599.5 233.0L600.8 236.9L603.4 238.5L593.7 244.8L591.1 245.5L589.5 245.6L586.4 242.8L576.9 236.2L570.8 232.5L570.8 230.3L576.6 227.5L578.8 225.7L582.6 224.9L581.8 221.5ZM598.1 217.4L600.6 216.9L601.9 217.4L601.1 219.6L602.0 220.1L600.3 221.6L602.6 223.2L600.8 225.6L600.0 227.8L599.5 225.1L596.3 222.7L597.6 221.0ZM602.6 223.2L605.3 223.7L608.5 224.6L609.3 226.1L613.7 227.8L616.1 226.8L615.9 225.1L616.8 224.3L619.2 223.7L621.0 224.2L624.0 225.7L624.0 240.9L624.0 244.0L622.4 244.0L622.4 244.8L609.7 238.5L606.9 239.9L603.4 238.5L600.8 236.9L599.5 233.0L600.0 227.8L600.8 225.6ZM624.0 225.7L627.6 226.2L631.7 226.4L635.0 226.4L638.5 226.2L639.7 229.0L638.6 231.7L635.9 228.4L637.4 232.5L640.5 237.7L642.7 240.9L634.2 240.9L624.0 240.9ZM557.7 242.5L564.0 242.0L565.6 238.5L565.6 234.6L570.8 234.6L570.8 232.5L576.9 236.2L575.0 236.3L575.8 249.6L569.5 251.1L566.4 251.1L565.2 252.4L558.5 250.2L559.1 246.4L558.9 244.2ZM576.9 236.2L586.4 242.8L589.5 245.6L591.1 245.5L591.1 249.6L586.4 251.5L584.8 252.7L581.3 252.7L579.0 254.6L576.1 259.2L571.9 259.5L571.1 257.5L566.5 256.0L565.2 252.4L566.4 251.1L569.5 251.1L575.8 249.6L575.0 236.3ZM591.1 245.5L593.7 244.8L603.4 238.5L606.9 239.9L609.0 242.8L609.0 247.2L606.6 251.1L606.0 254.1L603.4 254.8L597.9 255.1L591.0 254.3L590.2 257.1L588.0 255.7L586.1 254.6L584.8 252.7L586.4 251.5L591.1 249.6ZM606.9 239.9L609.7 238.5L622.4 244.8L622.4 250.8L620.0 253.5L619.2 255.4L621.7 259.8L619.2 261.4L614.2 261.7L609.0 263.8L608.6 260.0L606.6 260.5L608.2 256.7L606.6 255.1L606.0 254.1L606.6 251.1L609.0 247.2L609.0 242.8ZM622.4 244.8L622.4 244.0L624.0 244.0L624.0 240.9L634.2 240.9L642.7 240.9L643.4 246.4L645.4 247.4L642.1 253.0L641.6 255.6L639.6 258.7L638.2 260.6L638.0 263.0L639.7 267.4L641.2 268.3L638.2 269.0L637.4 269.8L633.4 269.8L631.8 268.5L627.9 267.7L624.7 264.6L622.4 262.2L621.7 259.8L619.2 255.4L620.0 253.5L622.4 250.8ZM642.1 253.0L645.4 247.4L646.5 250.5L647.8 252.1L649.5 253.7L651.4 255.9L652.5 255.6L652.2 258.4L653.9 261.4L659.9 263.0L655.4 267.9L652.4 267.9L650.6 269.4L649.2 269.1L647.5 269.6L645.3 269.9L641.5 268.7L641.2 268.3L639.7 267.4L638.0 263.0L638.2 260.6L639.6 258.7L641.6 255.6ZM652.2 258.4L654.9 259.2L658.7 258.1L661.8 257.8L665.5 257.0L665.1 259.0L664.8 260.6L662.6 265.0L660.2 268.5L657.9 271.7L654.4 273.7L651.7 276.5L649.2 278.1L649.2 271.2L650.6 269.4L652.4 267.9L655.4 267.9L659.9 263.0L653.9 261.4ZM649.2 278.1L647.8 280.8L646.4 283.0L644.0 281.4L638.0 277.2L638.2 273.7L639.7 272.6L638.2 269.0L641.2 268.3L641.5 268.7L645.3 269.9L647.5 269.6L649.2 269.1L650.6 269.4L649.2 271.2ZM646.4 283.0L646.5 286.3L646.8 288.2L648.3 291.9L644.5 293.3L640.5 293.9L639.1 293.7L638.2 290.6L636.6 290.4L633.4 289.2L632.6 287.4L631.1 285.1L631.7 282.7L632.9 280.8L632.6 277.3L638.0 277.2L644.0 281.4ZM631.2 277.8L632.6 277.3L638.0 277.2L638.2 273.7L639.7 272.6L638.2 269.0L637.4 269.8L633.4 269.8L633.1 270.1L631.4 274.7ZM631.2 277.8L632.6 277.3L632.9 280.8L631.7 282.7L630.3 282.5L630.3 279.9ZM603.9 285.2L605.0 284.8L610.5 284.9L612.4 288.2L614.5 288.1L618.9 287.1L619.2 291.1L622.1 293.0L624.7 294.2L627.4 293.9L629.5 295.6L631.5 294.9L631.1 296.1L630.3 289.0L632.6 287.4L631.1 285.1L631.7 282.7L630.3 282.5L630.3 279.9L631.2 277.8L631.4 274.7L633.1 270.1L631.8 268.5L627.9 267.7L624.7 267.2L620.8 268.5L619.8 269.3L616.8 268.7L613.9 270.1L612.1 273.2L609.7 277.2L608.2 282.5L606.6 282.9L604.2 285.1ZM607.2 265.8L609.0 263.8L614.2 261.7L619.2 261.4L621.7 259.8L622.4 262.2L624.7 264.6L627.9 267.7L624.7 267.2L620.8 268.5L619.8 269.3L616.8 268.7L613.9 270.1L609.9 272.1L608.2 269.4ZM597.9 268.2L598.7 269.4L599.6 270.9L600.0 272.0L602.3 272.1L609.9 272.1L608.2 269.4L607.2 265.8L609.0 263.8L608.6 260.0L606.6 260.5L608.2 256.7L606.6 255.1L606.9 255.9L605.0 260.8L603.4 264.6L601.1 264.7L599.5 266.1ZM600.0 272.0L602.3 272.1L609.9 272.1L613.9 270.1L612.1 273.2L609.7 277.2L608.2 282.5L606.6 282.9L604.2 285.1L603.8 284.0L602.0 281.8L599.2 277.2L599.5 274.0ZM588.8 265.7L591.6 265.7L593.8 268.8L595.5 268.7L597.9 268.2L599.5 266.1L601.1 264.7L603.4 264.6L605.0 260.8L606.9 255.9L606.6 255.1L603.4 254.8L597.9 255.1L591.0 254.3L590.2 257.1L588.8 261.4ZM558.5 250.2L565.2 252.4L566.5 256.0L562.9 255.7L558.1 256.0L557.5 252.9ZM558.1 256.0L562.9 255.7L566.5 256.0L571.1 257.5L571.9 259.5L572.7 262.3L571.1 263.6L572.7 268.7L569.5 267.1L566.4 264.7L563.5 262.2L563.0 260.1L560.8 258.4ZM572.7 268.7L578.2 267.4L581.3 268.2L582.9 267.7L586.1 266.1L588.8 265.7L588.8 261.4L590.2 257.1L588.0 255.7L586.1 254.6L584.8 252.7L581.3 252.7L579.0 254.6L576.1 259.2L571.9 259.5L572.7 262.3L571.1 263.6ZM576.1 259.2L579.8 260.0L584.5 258.2L588.0 257.5L588.0 255.7L586.1 254.6L584.8 252.7L581.3 252.7L579.0 254.6ZM603.9 285.2L605.3 289.8L606.0 294.5L603.6 298.5L603.1 302.9L605.8 302.4L613.7 303.1L617.3 304.0L621.1 303.2L619.2 301.2L619.2 296.1L622.4 296.1L622.1 293.0L619.2 291.1L618.9 287.1L614.5 288.1L612.4 288.2L610.5 284.9ZM603.1 302.9L605.3 307.2L607.4 311.6L608.5 318.2L610.5 320.7L616.1 320.4L616.1 314.7L616.1 310.3L617.6 310.3L617.6 304.5L621.3 303.8L624.4 303.7L621.1 303.2L617.3 304.0L613.7 303.1L605.8 302.4ZM610.5 320.7L611.8 323.3L613.4 326.9L613.5 329.6L616.1 330.5L620.0 329.1L624.0 329.1L626.3 328.9L628.7 327.2L631.8 325.0L633.4 322.8L635.6 320.7L636.4 319.0L635.0 317.9L633.9 316.2L634.8 314.1L634.2 310.8L630.9 310.6L627.1 313.3L624.7 316.2L620.8 315.5L616.1 314.7L616.1 320.4ZM627.1 322.2L629.0 320.7L630.9 322.0L629.5 323.9L627.7 323.3ZM616.1 310.3L616.1 314.7L620.8 315.5L624.7 316.2L627.1 313.3L630.9 310.6L628.7 309.5L625.5 304.0L624.4 303.7L621.3 303.8L617.6 304.5L617.6 310.3ZM624.4 303.7L625.5 304.0L628.7 309.5L630.9 310.6L634.2 310.8L635.8 307.9L636.4 305.3L636.4 301.6L632.5 300.2L628.7 301.6L627.1 303.8ZM619.2 296.1L619.2 301.2L621.1 303.2L624.4 303.7L627.1 303.8L628.7 301.6L632.5 300.2L632.2 298.6L636.9 297.7L636.1 295.3L637.0 292.6L636.6 290.4L633.4 289.2L630.3 289.0L631.1 296.1L629.5 295.6L627.4 293.9L624.7 294.2L622.1 293.0L622.4 296.1ZM648.3 291.9L648.4 294.5L648.6 299.0L646.8 301.5L643.4 303.5L640.5 306.4L640.5 310.0L640.4 313.5L636.3 316.5L635.0 317.9L634.8 314.1L634.2 310.8L635.8 307.9L636.4 305.3L636.4 301.6L632.5 300.2L632.2 298.6L636.9 297.7L638.9 298.5L640.2 301.6L640.5 297.7L639.1 293.7L640.5 293.9L644.5 293.3ZM637.0 292.6L636.1 295.3L636.9 297.7L638.9 298.5L640.2 301.6L640.5 297.7L639.1 293.7L638.2 290.6L636.6 290.4ZM662.3 294.5L664.0 300.1L663.1 302.4L661.3 307.9L659.1 314.7L656.0 315.8L653.5 312.7L652.8 309.5L654.6 306.4L653.9 302.4L657.4 300.4L659.9 298.5L661.7 296.4ZM674.9 307.2L675.7 307.5L675.2 307.9Z"/>
<g fill="#f0a20c"><circle cx="332.6" cy="240.6" r="0.8"/><circle cx="335" cy="241.5" r="0.8"/><circle cx="337.5" cy="242.5" r="0.9"/><circle cx="364" cy="290" r="0.9"/><circle cx="312.5" cy="296.7" r="1.1"/><circle cx="301" cy="300.5" r="0.8"/><circle cx="308.8" cy="308.6" r="0.8"/><circle cx="347.5" cy="303" r="0.9"/><circle cx="350" cy="303.6" r="0.7"/><circle cx="811.5" cy="254.6" r="0.8"/><circle cx="801" cy="260.5" r="0.8"/><circle cx="832.9" cy="264.5" r="0.8"/><circle cx="840.2" cy="267" r="0.8"/><circle cx="855.5" cy="271" r="0.7"/><circle cx="856.5" cy="274" r="0.8"/><circle cx="859.5" cy="277.5" r="0.8"/><circle cx="524" cy="257" r="0.7"/><circle cx="513" cy="238" r="0.8"/><circle cx="545" cy="248" r="0.7"/><circle cx="548" cy="250.5" r="0.7"/><circle cx="595.5" cy="273" r="0.6"/><circle cx="618" cy="294" r="0.6"/><circle cx="765" cy="280" r="0.6"/><circle cx="680" cy="295" r="0.5"/></g>
<g stroke="#f0a20c" stroke-width="0.9" stroke-linejoin="round">
<path fill="#3d8a37" d="M362.0 165.8L369.9 166.9L373.8 165.9L380.9 165.1L388.0 166.1L395.1 166.1L404.6 167.8L413.3 167.8L420.4 168.3L429.1 168.6L433.8 167.8L435.9 165.9L442.5 167.5L447.2 169.2L451.2 166.4L455.1 168.3L456.2 169.9L448.8 171.0L446.4 174.3L441.4 175.2L437.0 178.2L435.1 180.9L435.7 183.0L438.2 185.7L444.2 186.4L450.4 188.3L454.6 188.7L454.6 192.0L457.3 194.6L459.8 194.3L460.2 191.2L459.5 189.6L462.0 187.5L463.6 184.7L461.4 182.8L462.4 180.4L461.1 177.3L467.7 177.3L472.1 179.3L474.8 179.3L475.1 182.5L477.7 183.4L481.6 180.4L482.9 180.6L484.8 184.1L487.5 187.2L491.4 188.8L494.1 189.4L496.0 191.0L496.6 193.4L494.2 194.5L489.8 196.4L483.5 196.4L479.6 196.7L475.6 198.9L473.4 201.4L482.7 198.3L483.2 199.1L481.9 200.2L482.7 202.5L487.5 203.5L489.8 203.0L488.2 204.6L481.1 207.0L480.0 205.5L482.7 204.1L478.8 204.6L477.5 203.5L477.2 201.0L475.3 200.8L474.0 201.9L471.7 204.6L466.3 204.6L463.8 205.9L459.8 207.3L454.3 209.3L454.5 204.1L451.2 202.2L443.1 199.9L434.9 197.6L434.3 198.3L390.4 198.3L388.0 197.5L387.2 196.7L383.3 195.6L382.5 193.2L379.4 189.9L378.4 189.3L379.4 187.4L376.5 186.3L374.0 183.4L370.7 181.2L367.5 182.2L365.2 180.4L362.0 180.4Z"/>
<path fill="#3d8a37" d="M490.9 200.5L496.1 197.2L496.9 194.2L500.9 197.8L501.3 200.5L499.6 201.9L496.1 200.5Z"/>
<path fill="#3d8a37" d="M487.0 170.5L483.5 173.0L480.4 177.1L472.5 176.5L467.7 174.0L462.2 173.5L469.3 172.2L467.7 168.6L463.8 167.2L458.9 165.5L448.8 164.8L443.3 163.2L449.6 159.9L458.3 159.3L463.8 160.9L471.7 163.6L477.2 165.0L479.6 169.1Z"/>
<path fill="#3d8a37" d="M424.3 166.7L418.8 167.0L405.4 167.5L398.6 165.5L407.8 164.4L399.1 162.8L407.8 160.7L415.7 160.1L419.6 162.8L425.1 164.8Z"/>
<path fill="#3d8a37" d="M484.3 146.2L470.9 144.6L450.4 145.6L437.7 147.5L442.5 148.4L451.9 149.4L433.0 150.6L434.6 153.1L444.1 154.9L458.3 155.4L461.4 153.0L471.4 151.6L480.4 149.0Z"/>
<path fill="#3d8a37" d="M400.2 157.9L391.0 162.3L386.5 161.7L388.8 158.4Z"/>
<path fill="#3d8a37" d="M458.3 157.9L440.9 157.9L437.7 156.1L445.6 155.0L458.3 154.9Z"/>
<path fill="#3d8a37" d="M420.4 156.5L399.9 156.9L401.5 154.9L417.2 155.4Z"/>
<path fill="#3d8a37" d="M431.4 158.8L425.1 160.4L426.7 162.8L432.2 162.8L433.0 160.1Z"/>
<path fill="#3d8a37" d="M442.5 158.8L434.6 161.2L437.0 162.8L441.7 161.2Z"/>
<path fill="#3d8a37" d="M458.3 174.9L453.5 173.3L447.2 172.7L448.8 175.2L451.9 176.5Z"/>
<path fill="#3d8a37" d="M429.1 151.7L418.8 150.5L422.0 152.2L427.0 152.8Z"/>
<path fill="#3d8a37" d="M414.1 154.7L409.3 153.3L401.5 153.6L406.2 155.4Z"/>
<path fill="#3d8a37" d="M386.5 198.3L389.6 199.2L387.6 196.2L382.5 195.4Z"/>
<path fill="#3d8a37" d="M448.8 147.0L433.0 147.8L434.6 150.1L440.9 150.9L445.6 149.0Z"/>
<path fill="#3d8a37" d="M433.0 166.4L429.1 165.8L428.3 167.3L431.4 167.8Z"/>
<path fill="#3d8a37" d="M398.3 154.9L390.4 155.5L393.6 153.5L400.7 154.1Z"/>
<path fill="#3d8a37" d="M457.5 160.2L463.8 161.0L461.4 159.5Z"/>
<path fill="#3d8a37" d="M436.2 154.4L429.9 155.7L425.9 154.4L431.4 152.8Z"/>
<path fill="#3d8a37" d="M425.1 155.4L420.4 154.7L422.0 156.8L426.7 156.5Z"/>
<path fill="#3d8a37" d="M465.4 177.4L458.3 176.8L460.6 178.4Z"/>
<path fill="#1b5119" d="M387.7 199.2L390.4 198.3L434.3 198.3L434.9 197.6L443.1 199.9L451.2 202.2L454.5 204.1L454.3 209.3L459.8 207.3L463.8 205.9L466.3 204.6L471.7 204.6L474.0 201.9L475.3 200.8L477.2 201.0L477.5 203.5L478.8 204.9L473.7 206.8L473.1 209.3L471.0 210.4L467.7 211.5L467.4 213.3L465.4 214.8L464.6 217.2L465.4 219.9L461.6 221.9L456.7 225.4L456.1 228.3L458.3 233.3L457.6 235.8L455.4 234.6L454.2 231.7L451.9 228.3L448.0 227.6L443.3 227.9L443.4 229.8L440.9 229.4L436.2 228.9L431.1 231.9L431.1 234.7L427.5 232.2L424.5 228.6L422.0 229.8L419.3 228.3L416.4 225.4L413.8 225.4L409.3 226.2L403.3 224.3L399.7 224.3L397.5 221.9L394.2 221.0L391.2 216.4L389.1 212.8L388.5 209.5L388.0 207.7L389.0 202.7Z"/>
<path fill="#1b5119" d="M362.0 165.8L362.0 180.4L365.2 180.4L367.5 182.2L370.7 181.2L374.0 183.4L376.5 186.3L379.4 187.4L378.4 189.3L373.8 188.0L369.1 183.8L363.6 181.4L357.3 180.9L351.7 180.1L347.8 182.2L345.0 182.2L341.5 184.9L337.5 186.9L330.4 188.5L326.5 189.3L324.9 189.8L332.0 186.6L336.0 184.4L336.8 183.0L329.0 183.0L328.1 180.9L323.8 180.1L324.9 176.2L330.4 173.8L324.1 173.8L319.4 172.1L325.4 170.5L329.2 171.1L326.2 168.6L321.8 167.8L326.0 166.7L329.7 164.7L337.1 163.1L344.6 163.9L354.1 164.8Z"/>
<path fill="#1b5119" d="M338.5 243.7L340.2 244.8L338.8 245.8L338.2 244.5Z"/>
<path fill="#1b5119" d="M337.5 242.6L336.3 242.1L334.9 241.5L332.8 240.6L335.2 242.0Z"/>
<path fill="#e1f0df" d="M469.3 151.7L480.4 148.6L486.7 146.5L502.4 145.6L516.6 144.3L534.0 143.7L549.8 145.3L554.5 147.0L565.6 147.5L552.9 149.4L556.1 154.1L551.4 157.2L552.9 160.4L549.8 164.4L545.8 166.7L534.0 167.8L529.3 170.7L523.7 172.2L521.4 173.8L517.4 178.6L515.4 180.9L511.9 180.1L507.2 178.1L504.0 175.4L501.7 172.2L500.1 169.9L504.0 166.7L498.5 164.4L497.7 161.2L493.0 156.5L478.0 155.2Z"/>
<path fill="#c7e3c5" d="M546.6 172.2L549.8 170.8L559.3 170.7L561.6 171.8L563.0 172.9L560.8 174.1L555.0 175.6L549.8 174.9Z"/>
<path fill="#9acf98" d="M399.7 224.3L403.3 224.3L409.3 226.2L413.8 225.4L416.4 225.4L419.3 228.3L422.0 229.8L424.5 228.6L427.5 232.2L431.1 234.7L430.3 240.9L431.1 243.3L433.8 245.9L435.4 246.9L439.3 246.2L441.7 244.4L441.8 242.5L447.1 241.7L446.4 244.0L445.2 246.4L443.9 247.5L441.1 247.5L440.3 248.5L441.7 250.2L439.0 251.6L439.0 252.7L436.2 250.4L432.2 251.0L429.1 249.9L424.3 248.0L420.4 245.8L418.0 243.3L418.3 241.0L416.4 238.7L413.3 235.4L409.3 231.6L406.7 228.4L405.4 226.2L403.3 225.4L403.3 226.7L405.4 230.0L407.3 232.5L408.9 234.6L410.4 237.6L411.1 239.5L407.8 236.8L406.2 233.5L402.9 231.7L404.3 230.3L401.5 227.5L400.5 225.3Z"/>
<path fill="#c7e3c5" d="M439.0 252.7L441.7 250.2L440.3 248.5L441.1 247.5L443.9 247.5L445.2 246.4L445.3 249.6L448.8 250.5L451.9 250.7L453.2 252.1L452.7 255.9L452.4 258.2L453.5 259.8L455.9 261.7L459.0 260.6L462.4 261.9L462.4 263.6L460.9 263.3L458.3 264.1L457.6 262.5L453.7 262.7L449.3 260.0L449.3 258.1L446.4 255.2L443.7 254.3L440.3 253.7Z"/>
<path fill="#f2f9f1" d="M446.4 255.2L448.8 253.7L450.4 252.6L453.2 252.1L452.7 255.9L452.4 258.2L449.3 258.1Z"/>
<path fill="#9acf98" d="M439.0 252.7L441.7 250.2L440.3 248.5L441.1 247.5L443.9 247.5L445.2 246.4L445.3 249.6L443.7 250.5L443.7 252.9L442.3 254.0L440.3 253.7Z"/>
<path fill="#e1f0df" d="M450.4 241.0L454.3 239.1L458.3 239.1L462.7 241.5L467.4 243.7L461.9 244.2L460.6 241.7L455.4 240.6L451.9 241.0Z"/>
<path fill="#e1f0df" d="M466.9 246.6L469.6 244.2L474.0 244.5L476.7 246.2L474.0 246.9L471.7 247.8L467.1 247.0Z"/>
<path fill="#e1f0df" d="M460.9 246.6L464.1 246.9L463.0 247.5Z"/>
<path fill="#e1f0df" d="M478.5 246.4L481.0 246.6L480.4 247.2L478.5 247.2Z"/>
<path fill="#e1f0df" d="M461.4 233.3L463.0 233.8L462.2 236.2L460.9 235.4Z"/>
<path fill="#9acf98" d="M462.4 265.2L462.4 263.6L462.4 261.9L464.6 260.6L465.4 258.9L467.4 257.8L470.6 257.0L472.0 256.0L471.0 257.5L470.3 258.1L469.3 260.6L470.1 263.8L471.7 264.6L473.9 264.6L478.0 265.8L477.4 268.5L478.3 270.2L477.5 271.5L478.8 272.1L477.8 273.2L474.8 273.9L475.0 277.2L474.0 282.2L473.7 281.3L470.3 279.4L468.4 277.5L465.7 275.8L463.0 274.8L460.5 273.5L459.5 273.4L460.5 271.7L462.7 269.3Z"/>
<path fill="#c7e3c5" d="M470.3 258.1L471.5 257.8L474.0 257.5L476.7 258.4L480.4 258.9L483.5 258.7L486.7 258.7L488.2 260.0L489.8 262.2L488.7 263.8L488.2 264.9L488.6 267.4L485.6 269.3L482.7 269.3L483.5 271.7L481.1 274.3L478.8 272.1L477.5 271.5L478.3 270.2L477.4 268.5L478.0 265.8L473.9 264.6L471.7 264.6L470.1 263.8L469.3 260.6Z"/>
<path fill="#f2f9f1" d="M489.8 262.2L492.2 264.6L494.6 266.1L497.7 266.3L500.1 266.8L502.4 268.0L503.1 269.0L501.7 271.7L499.3 272.1L496.1 272.4L493.0 273.2L490.1 273.2L489.8 272.0L490.6 269.3L488.6 267.4L488.2 264.9L488.7 263.8Z"/>
<path fill="#5bab5a" d="M467.9 287.4L470.1 290.6L473.3 290.6L473.1 293.0L476.1 293.1L481.5 292.8L483.0 295.3L488.2 296.9L489.5 299.4L492.5 301.3L493.8 304.3L492.7 307.6L495.3 310.8L496.9 313.3L498.8 314.3L499.3 316.6L496.6 318.8L493.6 323.3L496.1 324.5L500.1 328.8L502.1 326.4L504.8 323.7L507.5 320.6L507.8 317.4L509.1 315.1L514.3 312.2L518.5 311.1L520.6 307.9L522.6 303.2L523.1 296.9L525.8 293.7L528.8 290.6L529.6 287.0L528.5 283.8L523.7 281.4L519.0 280.2L514.3 279.5L508.0 276.9L505.6 274.8L505.6 272.8L504.0 269.3L503.1 269.0L501.7 271.7L499.3 272.1L496.1 272.4L493.0 273.2L490.1 273.2L489.8 272.0L490.6 269.3L488.6 267.4L485.6 269.3L482.7 269.3L483.5 271.7L481.1 274.3L478.8 272.1L477.8 273.2L474.8 273.9L475.0 277.2L474.0 282.2L469.5 283.8Z"/>
<path fill="#c7e3c5" d="M457.5 278.0L458.3 275.1L459.5 273.4L460.5 273.5L463.0 274.8L465.7 275.8L465.2 278.0L460.9 281.0L459.4 282.7L457.9 281.0L457.9 279.5Z"/>
<path fill="#c7e3c5" d="M456.4 285.1L456.7 282.4L457.9 281.0L459.4 282.7L460.9 281.0L465.2 278.0L465.7 275.8L468.4 277.5L470.3 279.4L473.7 281.3L474.0 282.2L469.5 283.8L467.9 287.4L470.1 290.6L473.3 290.6L473.1 293.0L476.1 295.3L475.0 299.3L475.5 301.2L473.7 304.8L471.8 303.7L466.1 299.7L464.1 296.9L460.6 290.9L458.6 286.6Z"/>
<path fill="#c7e3c5" d="M476.1 293.1L481.5 292.8L483.0 295.3L488.2 296.9L489.5 299.4L492.5 301.3L493.8 304.3L492.7 306.8L487.1 307.9L485.7 310.6L479.9 310.5L477.5 311.6L475.9 307.9L475.5 301.2L475.0 299.3L476.1 295.3L473.1 293.0Z"/>
<path fill="#e1f0df" d="M492.7 306.8L492.7 307.6L495.3 310.8L496.9 313.3L498.8 314.3L498.3 316.0L492.2 318.5L493.6 315.7L490.6 313.5L488.2 312.8L485.7 310.6L487.1 307.9Z"/>
<path fill="#c7e3c5" d="M493.6 323.3L496.1 324.5L500.1 328.8L497.7 330.7L495.3 330.7L492.3 329.4L492.7 326.9L493.3 323.7Z"/>
<path fill="#9acf98" d="M479.9 310.5L485.7 310.6L488.2 312.8L490.6 313.5L493.6 315.7L492.2 318.5L498.3 316.0L499.3 316.6L496.6 318.8L493.6 323.3L493.3 323.7L492.7 326.9L492.3 329.4L493.9 332.1L494.6 334.0L493.4 335.9L486.7 337.1L486.2 339.7L481.9 340.3L482.7 342.3L481.1 346.6L478.0 349.0L480.4 350.6L476.4 354.7L475.6 357.0L476.6 358.3L471.7 357.7L470.4 356.1L468.8 354.5L470.1 352.1L471.2 348.2L471.4 345.0L471.0 340.3L472.5 336.4L473.3 332.4L474.0 327.7L473.6 322.9L475.0 319.8L476.7 317.1L476.4 314.3L478.5 311.9L477.5 311.6Z"/>
<path fill="#9acf98" d="M476.2 358.6L481.8 361.9L478.3 362.9L476.2 362.2Z"/>
<path fill="#9acf98" d="M473.7 304.8L475.5 303.2L475.9 307.9L477.5 311.6L478.5 311.9L476.4 314.3L476.7 317.1L475.0 319.8L473.6 322.9L474.0 327.7L473.3 332.4L472.5 336.4L471.0 340.3L471.4 345.0L471.2 348.2L470.1 352.1L468.8 354.5L470.4 356.1L471.7 357.7L476.6 358.3L473.3 360.0L470.9 360.8L466.9 358.4L466.1 354.5L465.4 351.3L467.7 348.2L468.5 343.5L468.0 340.3L468.7 334.5L470.9 329.6L471.7 322.9L472.0 316.6L473.4 312.7Z"/>
<path fill="#9acf98" d="M476.2 362.2L474.0 362.4L470.9 360.8L473.3 359.2L476.2 358.6Z"/>
<path fill="#5bab5a" d="M592.4 178.6L592.4 180.9L593.2 182.8L594.8 183.9L597.4 183.9L600.3 182.5L601.5 182.2L602.3 182.7L603.4 180.1L603.9 178.6L603.6 176.2L606.4 173.8L607.4 171.9L609.0 171.0L610.5 169.1L612.9 167.5L615.9 167.7L617.6 166.7L619.8 167.2L622.4 167.5L625.1 166.7L627.1 165.3L629.5 166.7L630.3 165.6L633.4 165.5L629.5 163.6L623.2 163.4L617.6 164.8L612.9 165.9L609.0 167.5L607.4 169.1L605.0 171.5L603.8 173.0L601.1 174.1L597.9 175.7L593.2 177.4Z"/>
<path fill="#5bab5a" d="M602.3 182.7L603.4 184.1L604.5 186.6L604.9 188.2L607.1 188.0L609.7 186.9L610.5 184.9L610.9 183.1L613.7 182.0L614.2 180.4L611.6 178.9L612.1 177.0L615.0 175.6L617.6 174.1L619.2 172.2L622.7 171.8L621.7 169.9L621.6 168.3L617.6 166.7L615.9 167.7L612.9 167.5L610.5 169.1L609.0 171.0L607.4 171.9L606.4 173.8L603.6 176.2L603.9 178.6L603.4 180.1Z"/>
<path fill="#5bab5a" d="M622.7 171.8L624.6 172.9L624.4 174.1L622.1 175.2L619.2 176.8L618.3 178.7L618.4 180.1L620.8 181.1L624.7 180.4L628.4 180.1L631.1 178.6L634.2 176.3L631.5 174.9L631.8 172.9L630.7 170.2L632.0 168.8L629.8 166.9L629.9 165.5L629.5 166.7L627.1 165.3L625.1 166.7L622.4 167.5L619.8 167.2L617.6 166.7L621.6 168.3L621.7 169.9Z"/>
<path fill="#5bab5a" d="M597.3 188.0L598.1 185.5L601.1 184.5L601.1 186.4L601.5 187.2L600.1 188.8L599.3 189.1L598.1 189.0Z"/>
<path fill="#2a6d27" d="M575.5 196.7L579.8 195.8L586.6 195.0L587.2 192.4L585.0 191.3L583.7 189.6L582.0 187.9L580.6 187.2L581.7 184.9L579.5 183.1L576.6 183.1L574.7 184.9L575.7 186.8L575.0 187.7L576.6 189.1L579.0 189.0L579.8 190.5L579.8 191.5L577.4 191.7L577.9 192.9L576.3 193.9L579.3 194.5L577.4 195.0Z"/>
<path fill="#2a6d27" d="M575.0 190.2L575.8 189.4L574.9 188.5L573.0 188.7L572.2 189.8L573.5 190.1Z"/>
<path fill="#9acf98" d="M575.0 193.2L574.7 191.2L575.0 190.2L573.5 190.1L572.2 189.8L573.0 188.7L571.4 188.5L570.8 190.1L568.7 190.1L569.0 191.5L568.4 193.4L569.5 194.2L571.9 193.9Z"/>
<path fill="#3d8a37" d="M577.1 198.9L582.1 198.8L582.6 197.2L584.8 197.2L587.0 195.3L588.4 195.0L591.1 196.9L593.7 197.5L594.6 197.5L597.4 198.3L596.3 200.5L594.0 202.5L595.5 203.2L595.5 205.9L596.3 206.5L594.8 207.6L591.6 207.0L589.4 207.7L589.5 208.7L586.9 208.5L581.7 207.1L582.6 203.0L581.0 201.3L577.4 200.0Z"/>
<path fill="#3d8a37" d="M598.1 207.9L599.5 208.1L599.2 210.3L598.2 209.5Z"/>
<path fill="#3d8a37" d="M569.8 207.7L571.9 206.6L577.4 207.1L581.7 207.1L586.9 208.5L589.5 208.7L589.5 209.5L585.8 210.9L584.5 212.6L584.8 214.4L583.4 216.3L581.2 217.7L577.6 217.7L575.7 218.8L574.2 217.4L572.8 216.9L572.7 215.3L573.5 214.1L572.7 213.1L573.6 210.9L574.4 209.8L571.6 209.2L570.5 209.3Z"/>
<path fill="#5bab5a" d="M570.5 209.3L571.6 209.2L574.4 209.8L573.6 210.9L572.7 213.1L573.5 214.1L572.7 215.3L572.8 216.9L570.5 217.2L570.6 214.5L569.5 214.4L570.6 211.5Z"/>
<path fill="#5bab5a" d="M588.4 195.0L589.9 194.5L591.3 193.2L591.9 192.0L593.2 191.3L595.5 191.2L595.2 193.2L593.8 193.9L594.1 195.4L594.6 197.5L593.7 197.5L591.1 196.9Z"/>
<path fill="#2a6d27" d="M595.5 191.2L598.1 190.5L598.1 189.0L600.1 189.1L601.9 190.4L604.2 189.6L606.9 190.5L607.2 191.7L607.5 193.1L607.7 193.9L608.2 195.0L607.1 195.1L603.9 196.2L606.3 198.3L605.0 199.4L604.7 200.5L601.1 200.6L599.6 200.6L596.5 200.5L596.3 199.5L597.4 198.3L594.6 197.5L594.1 195.4L593.8 193.9L595.2 193.2Z"/>
<path fill="#5bab5a" d="M606.9 190.5L610.5 189.6L613.7 189.1L615.7 189.8L620.5 189.8L621.6 190.5L622.2 192.4L621.1 193.1L622.4 195.4L621.6 196.4L620.2 198.1L615.3 197.5L614.2 197.5L612.4 196.2L611.0 196.1L608.2 195.0L607.7 193.9L607.5 193.1L607.2 191.7Z"/>
<path fill="#c7e3c5" d="M603.9 196.2L607.1 195.1L608.2 195.0L611.0 196.1L612.4 196.2L614.2 197.5L615.3 197.5L620.2 198.1L619.4 199.2L616.8 199.1L614.2 200.2L611.5 199.9L611.2 198.9L608.2 198.3L606.3 198.3Z"/>
<path fill="#c7e3c5" d="M599.6 200.6L601.1 200.6L604.7 200.5L605.0 199.4L606.3 198.3L608.2 198.3L611.2 198.9L611.5 199.9L609.9 201.4L610.5 202.2L606.0 202.2L603.8 201.4L601.1 201.7L599.5 201.3Z"/>
<path fill="#5bab5a" d="M594.0 202.5L596.3 200.5L599.6 200.6L599.5 201.3L601.1 201.7L598.7 203.0L595.5 203.2Z"/>
<path fill="#c7e3c5" d="M609.9 201.4L610.5 202.2L611.8 203.2L614.2 203.2L616.5 202.9L618.4 202.1L620.6 200.0L619.4 199.2L616.8 199.1L614.2 200.2L611.5 199.9Z"/>
<path fill="#3d8a37" d="M596.3 206.5L598.4 205.5L600.6 206.3L601.9 208.5L604.2 210.1L606.6 211.2L609.1 212.5L610.1 214.2L609.1 215.6L609.9 215.6L611.5 214.1L610.5 213.0L611.3 211.7L613.7 212.2L609.7 210.1L606.6 208.4L603.9 205.9L603.9 204.1L606.1 203.5L606.0 202.2L603.8 201.4L601.1 201.7L598.7 203.0L595.5 203.2L595.5 205.9Z"/>
<path fill="#3d8a37" d="M604.1 215.6L609.1 215.2L608.3 217.7L604.1 216.3Z"/>
<path fill="#3d8a37" d="M597.8 214.1L597.4 210.9L600.0 210.9L599.6 213.9Z"/>
<path fill="#c7e3c5" d="M606.1 203.5L606.0 202.2L610.5 202.2L611.8 203.2L614.2 203.2L616.5 202.9L618.3 204.9L619.2 205.4L619.8 205.4L620.8 207.4L619.8 208.9L620.6 210.4L617.6 211.2L616.1 213.1L615.0 211.7L615.3 209.6L613.7 208.5L611.3 207.4L608.5 205.7L607.4 204.3Z"/>
<path fill="#9acf98" d="M616.5 202.9L618.4 202.1L620.6 200.0L623.8 200.3L626.5 199.5L627.9 201.0L629.0 203.8L631.2 204.1L629.8 205.7L628.7 206.5L627.1 206.0L624.7 206.6L621.6 206.5L619.8 205.4L619.2 205.4L618.3 204.9Z"/>
<path fill="#e1f0df" d="M626.5 199.5L629.0 199.5L631.4 202.4L629.0 203.8L627.9 201.0Z"/>
<path fill="#c7e3c5" d="M619.8 205.4L621.6 206.5L624.7 206.6L627.1 206.0L628.7 206.5L627.9 208.5L628.7 209.3L625.8 209.8L622.4 210.1L620.6 210.4L619.8 208.9L620.8 207.4Z"/>
<path fill="#5bab5a" d="M616.1 213.1L617.6 211.2L620.6 210.4L622.4 210.1L625.8 209.8L626.0 211.2L622.4 211.2L621.3 212.5L620.2 213.1L621.3 214.1L622.4 215.5L620.0 215.3L621.1 216.7L619.5 218.0L618.4 217.2L618.0 216.0L618.9 215.2L617.3 214.4L616.4 213.3Z"/>
<path fill="#5bab5a" d="M621.6 219.9L626.0 220.1L622.4 220.4Z"/>
<path fill="#c7e3c5" d="M620.2 198.1L621.6 196.4L622.4 195.4L622.4 194.2L627.1 194.2L632.6 194.6L635.0 193.4L638.2 194.3L640.5 196.1L644.5 196.7L647.1 197.3L647.6 199.1L644.9 200.5L643.7 201.4L640.5 202.2L642.1 204.0L638.2 205.5L635.8 204.0L637.4 203.0L634.2 202.1L631.8 203.3L631.2 204.1L629.0 203.8L631.4 202.4L629.0 199.5L626.5 199.5L623.8 200.3L620.6 200.0L619.4 199.2Z"/>
<path fill="#c7e3c5" d="M621.1 193.1L622.2 192.4L621.6 190.5L624.7 189.9L626.5 187.7L629.0 187.1L633.1 187.9L633.4 190.4L635.0 191.7L634.7 192.3L635.0 193.4L632.6 194.6L627.1 194.2L622.4 194.2Z"/>
<path fill="#c7e3c5" d="M617.6 187.7L618.0 186.0L619.2 184.7L621.3 185.5L623.0 185.2L621.6 183.3L621.4 182.0L624.7 181.6L628.7 181.9L627.9 183.3L628.2 185.2L629.0 187.1L626.5 187.7L624.7 189.9L621.6 190.5L620.5 189.8L618.1 188.5Z"/>
<path fill="#5bab5a" d="M626.5 210.0L628.7 209.3L630.3 210.6L633.9 210.6L637.4 209.3L640.0 209.3L643.7 210.9L647.6 211.1L650.0 210.1L653.0 210.7L655.2 213.0L654.1 213.4L654.7 215.2L654.2 215.8L655.2 216.9L651.4 217.1L648.7 217.1L644.8 217.4L642.3 217.5L641.2 218.9L641.6 217.8L639.1 217.5L635.8 218.6L632.8 217.7L631.4 218.5L628.7 217.7L627.6 216.7L626.0 215.2L626.6 213.3L625.8 212.2L626.0 211.2Z"/>
<path fill="#c7e3c5" d="M635.5 220.2L638.9 219.4L638.0 220.5L636.3 221.0Z"/>
<path fill="#c7e3c5" d="M647.6 207.1L650.0 207.3L653.1 208.1L655.5 208.4L657.9 209.5L661.0 209.6L662.6 212.0L661.7 214.8L660.9 215.5L660.2 214.1L657.9 214.2L656.3 214.1L655.2 213.0L653.0 210.7L650.0 210.1Z"/>
<path fill="#5bab5a" d="M643.7 201.4L644.9 200.5L647.6 199.1L647.1 197.3L644.5 196.7L640.5 196.1L638.2 194.3L635.0 193.4L634.7 192.3L635.0 191.7L633.4 190.4L633.1 187.9L629.0 187.1L628.2 185.2L627.9 183.3L628.7 181.9L631.8 181.1L628.4 180.1L631.1 178.6L634.2 176.3L631.5 174.9L631.8 172.9L630.7 170.2L632.0 168.8L629.8 166.9L629.9 165.5L633.1 165.5L636.6 166.1L642.1 166.7L649.2 168.9L648.4 171.0L639.7 170.7L638.9 173.8L642.9 174.9L647.6 173.8L653.9 170.7L653.9 167.7L660.2 168.8L668.1 167.3L676.0 166.9L680.0 165.3L691.8 167.5L689.9 163.9L693.4 160.4L698.1 160.7L698.9 163.6L699.4 167.5L702.9 166.7L700.5 162.8L703.6 161.2L710.7 161.7L711.5 159.6L721.8 158.8L721.0 157.4L729.7 156.1L739.1 155.4L749.1 153.0L754.1 154.4L762.8 155.8L763.6 159.8L771.5 159.6L780.2 159.5L787.3 161.0L789.6 163.6L799.1 162.6L803.8 161.4L814.9 161.5L822.8 162.9L832.2 163.6L837.0 165.1L848.0 165.8L853.5 165.0L862.2 165.5L868.5 167.0L868.5 172.2L866.2 173.8L863.8 177.0L859.1 178.1L853.5 180.9L846.4 181.2L842.5 181.1L840.9 184.1L841.7 187.1L839.8 189.0L836.7 191.7L834.3 193.9L831.8 195.1L830.7 191.2L829.9 188.0L831.6 185.2L834.6 184.1L837.8 180.9L836.2 178.2L830.7 178.4L827.5 181.7L823.6 182.2L818.0 182.0L813.3 182.0L808.9 182.5L804.6 185.2L800.2 189.4L803.8 190.2L807.6 192.0L807.5 195.9L806.2 199.4L803.1 201.4L799.1 204.6L794.7 208.1L791.2 208.4L790.7 208.9L790.6 207.7L791.7 204.9L794.7 204.4L797.1 200.3L796.0 199.2L790.7 198.4L785.7 197.0L783.0 192.0L779.4 191.0L775.1 191.5L773.5 192.6L774.6 195.9L773.2 197.0L770.5 197.5L768.7 197.0L765.2 196.4L760.8 197.6L755.7 197.3L752.6 196.2L746.2 196.4L745.5 194.3L740.7 193.5L738.8 195.1L739.5 196.1L737.9 197.2L730.1 195.4L727.6 196.2L723.0 198.0L722.3 198.1L717.8 195.9L716.1 195.1L711.5 194.8L707.3 191.5L705.2 190.1L700.5 190.4L696.5 188.7L693.1 188.3L687.4 189.8L681.5 190.4L680.8 192.0L682.3 192.8L680.8 194.2L676.0 195.6L672.4 195.8L668.9 194.3L664.2 194.2L661.3 195.8L659.1 196.2L658.0 199.1L658.8 200.0L661.0 202.1L662.1 202.4L659.5 203.8L659.0 205.9L659.6 207.7L661.0 209.6L657.9 209.5L655.5 208.4L653.1 208.1L650.0 207.3L647.6 207.1L644.5 205.4L642.9 204.3L644.8 202.7Z"/>
<path fill="#5bab5a" d="M808.6 203.0L810.9 201.7L809.7 198.3L810.5 194.0L810.2 191.2L809.7 189.9L808.7 191.5L808.3 195.1L808.7 199.9L808.3 202.2Z"/>
<path fill="#5bab5a" d="M665.0 162.8L668.1 163.9L674.4 164.2L671.3 161.2L674.4 158.8L682.3 156.0L692.6 154.3L688.6 155.4L676.0 158.0L672.1 160.4L667.3 162.0Z"/>
<path fill="#5bab5a" d="M734.4 148.6L739.1 151.3L749.4 150.6L741.5 148.1Z"/>
<path fill="#5bab5a" d="M800.7 156.9L807.0 158.0L814.9 156.9L808.6 155.7Z"/>
<path fill="#5bab5a" d="M866.5 162.8L868.5 163.2L868.5 163.9L866.2 163.9Z"/>
<path fill="#5bab5a" d="M300.5 167.0L306.8 169.1L313.1 170.2L316.7 171.5L314.7 172.2L311.5 174.1L306.8 173.0L300.5 172.2Z"/>
<path fill="#5bab5a" d="M300.5 163.2L305.2 162.9L302.8 163.9L300.5 163.9Z"/>
<path fill="#5bab5a" d="M616.1 189.0L620.5 188.8L620.5 189.8L615.7 189.8Z"/>
<path fill="#c7e3c5" d="M722.3 198.1L719.4 201.4L715.5 201.1L714.7 204.0L711.4 204.6L711.1 209.0L710.7 208.9L702.1 207.7L697.3 209.0L695.0 210.9L692.6 211.4L688.6 207.9L682.3 207.0L680.8 205.5L677.0 203.6L672.9 204.6L672.7 210.4L667.8 209.5L667.3 209.6L665.5 207.4L664.2 205.5L668.1 204.1L665.8 201.6L662.1 202.4L661.0 202.1L658.8 200.0L658.0 199.1L659.1 196.2L661.3 195.8L664.2 194.2L668.9 194.3L672.4 195.8L676.0 195.6L680.8 194.2L682.3 192.8L680.8 192.0L681.5 190.4L687.4 189.8L693.1 188.3L696.5 188.7L700.5 190.4L705.2 190.1L707.3 191.5L711.5 194.8L716.1 195.1L717.8 195.9Z"/>
<path fill="#f2f9f1" d="M667.3 209.6L672.7 210.4L674.8 210.6L677.0 208.2L679.2 209.0L681.2 210.6L683.0 212.5L685.8 214.2L689.4 216.6L687.1 216.7L683.1 219.6L681.1 219.4L680.0 218.0L677.6 216.3L674.9 215.6L671.0 216.6L669.6 217.4L669.6 214.2L668.1 212.5Z"/>
<path fill="#e1f0df" d="M672.7 210.4L672.9 204.6L677.0 203.6L680.8 205.5L682.3 207.0L688.6 207.9L692.6 211.4L695.0 210.9L697.3 210.6L699.7 211.1L697.3 212.2L694.2 211.8L692.6 213.3L691.0 216.7L689.4 216.6L685.8 214.2L683.0 212.5L681.2 210.6L679.2 209.0L677.0 208.2L674.8 210.6Z"/>
<path fill="#e1f0df" d="M692.6 213.3L694.2 211.8L697.3 212.2L699.7 211.1L697.3 210.6L695.0 210.9L697.3 209.0L702.1 207.7L710.7 208.9L711.1 209.0L708.4 210.0L705.7 210.9L702.9 211.7L700.5 213.3L702.1 214.7L703.2 217.2L702.2 217.2L697.3 215.8L695.7 215.2L692.3 216.9L691.0 216.7Z"/>
<path fill="#f2f9f1" d="M680.6 228.6L683.1 229.2L689.3 228.4L691.0 226.4L693.9 225.3L695.0 221.9L696.9 221.2L697.3 218.0L699.7 217.5L702.2 217.2L697.3 215.8L695.7 215.2L692.3 216.9L689.4 216.6L687.1 216.7L683.1 219.6L681.1 219.4L680.4 221.5L680.0 223.5L680.6 225.9Z"/>
<path fill="#5bab5a" d="M681.7 235.8L689.4 235.5L692.1 238.2L693.1 237.4L696.5 237.3L696.1 235.2L694.2 233.6L695.0 231.4L697.0 231.6L701.0 228.1L701.9 226.7L702.9 224.6L702.1 224.3L701.0 221.6L701.3 220.4L703.6 218.0L702.2 217.2L699.7 217.5L697.3 218.0L696.9 221.2L695.0 221.9L693.9 225.3L691.0 226.4L689.3 228.4L683.1 229.2L680.6 228.6L682.3 230.8L683.9 233.0L682.0 234.3Z"/>
<path fill="#5bab5a" d="M654.1 213.4L656.3 214.1L657.9 214.2L660.2 214.1L660.9 215.5L661.8 216.1L665.0 217.7L669.6 217.4L671.0 216.6L674.9 215.6L677.6 216.3L680.0 218.0L681.1 219.4L680.4 221.5L680.0 223.5L680.6 225.9L680.6 228.6L682.3 230.8L683.9 233.0L682.0 234.3L681.7 235.8L677.6 235.5L674.9 234.7L673.5 232.8L670.8 233.8L667.5 232.4L665.8 231.6L663.6 228.4L661.2 228.3L659.8 226.1L658.7 224.6L657.1 223.5L656.3 221.9L657.1 220.2L655.5 219.1L655.2 216.9L654.2 215.8L654.7 215.2Z"/>
<path fill="#c7e3c5" d="M645.7 222.9L649.2 221.3L649.7 218.2L651.4 217.1L655.2 216.9L655.5 219.1L657.1 220.2L656.3 221.9L657.1 223.5L658.7 224.6L659.8 226.1L661.2 228.3L660.1 228.3L658.8 228.4L657.9 229.7L655.0 229.5L650.8 226.5L646.4 224.8Z"/>
<path fill="#5bab5a" d="M642.1 229.0L643.7 228.3L644.5 227.5L646.4 224.8L650.8 226.5L655.0 229.5L657.9 229.7L659.5 230.6L661.0 231.6L662.8 233.2L663.7 234.6L664.7 236.5L665.9 237.4L666.6 239.3L672.1 239.8L671.6 244.0L666.6 245.6L661.8 246.2L658.7 248.8L657.6 248.5L652.7 248.3L652.0 249.6L650.0 247.2L648.4 244.7L646.4 241.7L645.3 238.0L643.5 236.3L641.3 233.3L639.7 231.3L639.1 231.3Z"/>
<path fill="#c7e3c5" d="M652.0 249.6L652.7 248.3L657.6 248.5L658.7 248.8L661.8 246.2L666.6 245.6L668.3 249.2L666.6 251.0L662.6 252.6L660.2 253.5L656.3 254.6L653.1 255.6L651.9 252.7Z"/>
<path fill="#e1f0df" d="M666.6 245.6L671.6 244.0L672.1 239.8L672.9 237.6L673.5 236.3L674.4 237.9L677.3 238.7L678.9 240.3L676.8 243.4L675.6 245.6L673.8 246.6L671.3 248.8L668.3 249.2Z"/>
<path fill="#c7e3c5" d="M665.9 237.4L666.6 239.3L672.1 239.8L672.9 237.6L673.5 236.3L672.9 234.6L671.3 236.5L668.1 237.4Z"/>
<path fill="#c7e3c5" d="M641.2 218.9L642.3 217.5L644.8 217.4L648.7 217.1L651.4 217.1L649.7 218.2L649.2 221.3L645.7 222.9L641.3 223.1L640.7 221.5Z"/>
<path fill="#e1f0df" d="M639.7 229.0L640.5 224.5L640.7 224.0L642.6 224.6L646.4 224.8L644.5 227.5L643.7 228.3L642.1 229.0Z"/>
<path fill="#5bab5a" d="M638.5 226.2L639.7 229.0L640.5 224.5L640.7 223.1L639.9 223.4L638.9 225.9Z"/>
<path fill="#c7e3c5" d="M639.9 223.4L640.7 223.1L642.3 221.6L641.2 220.8Z"/>
<path fill="#1b5119" d="M700.5 213.3L702.9 211.7L705.7 210.9L708.4 210.0L711.1 209.0L711.4 204.6L714.7 204.0L715.5 201.1L719.4 201.3L719.9 199.2L722.3 198.1L724.6 199.7L727.3 202.7L727.9 204.1L734.9 205.9L736.5 208.2L743.6 208.4L750.2 210.0L754.1 208.7L761.1 206.6L760.4 205.2L763.6 204.9L768.3 202.2L770.7 201.9L773.5 201.7L770.5 197.5L773.2 197.0L774.6 195.9L773.5 192.6L775.1 191.5L779.4 191.0L783.0 192.0L785.7 197.0L790.7 198.4L796.0 199.2L797.1 200.3L794.7 204.4L791.7 204.9L790.6 207.7L788.9 208.7L786.5 209.5L784.1 210.1L780.6 212.6L777.3 211.7L775.4 211.2L772.3 213.7L770.2 214.2L772.0 216.4L775.4 216.0L777.8 217.2L774.3 218.8L772.6 220.4L774.6 223.5L776.9 225.6L776.2 227.0L777.0 228.6L776.2 230.9L773.9 233.8L772.8 235.8L769.9 238.0L768.3 239.5L764.7 240.4L761.2 241.2L758.9 242.1L758.4 243.6L757.4 241.5L754.9 241.7L752.9 239.6L750.7 238.7L747.0 239.9L745.8 240.3L744.8 242.1L744.0 241.5L742.6 241.7L741.2 240.7L740.4 237.6L738.5 237.9L739.6 233.8L740.2 232.2L738.0 231.6L736.0 229.2L733.8 229.4L729.7 231.7L726.2 231.1L724.6 232.5L723.4 231.6L720.2 231.4L716.3 229.5L713.1 227.6L710.0 226.7L708.7 225.1L709.0 222.7L707.3 219.6L704.7 219.1L703.2 217.2L702.1 214.7Z"/>
<path fill="#1b5119" d="M755.9 245.3L757.4 243.9L759.7 244.5L758.9 246.2L757.3 246.9L756.0 246.4Z"/>
<path fill="#5bab5a" d="M774.0 239.3L775.4 236.0L777.0 236.2L775.1 240.9Z"/>
<path fill="#e1f0df" d="M723.0 198.0L727.6 196.2L730.1 195.4L737.9 197.2L739.5 196.1L738.8 195.1L740.7 193.5L745.5 194.3L746.2 196.4L752.6 196.2L755.7 197.3L760.8 197.6L765.2 196.4L768.7 197.0L770.5 197.5L773.5 201.7L770.7 201.9L768.3 202.2L763.6 204.9L760.4 205.2L761.1 206.6L754.1 208.7L750.2 210.0L743.6 208.4L736.5 208.2L734.9 205.9L727.9 204.1L727.3 202.7L724.6 199.7Z"/>
<path fill="#5bab5a" d="M692.1 238.2L695.0 242.5L699.1 242.0L699.5 245.6L700.2 249.6L702.1 252.7L703.6 257.5L704.9 260.6L706.8 262.8L707.9 261.6L709.6 259.3L710.6 256.7L711.2 251.1L714.2 249.4L717.8 245.6L721.5 243.3L722.6 241.4L724.6 240.9L724.3 237.3L723.4 235.4L724.0 233.8L726.2 234.3L729.7 236.2L730.6 239.5L731.9 237.9L733.8 236.2L734.9 233.6L738.0 231.6L736.0 229.2L733.8 229.4L729.7 231.7L726.2 231.1L724.6 232.5L723.5 233.9L719.4 233.5L717.1 232.2L712.3 230.5L710.7 230.2L713.1 227.6L710.0 226.7L708.7 225.1L709.0 222.7L707.3 219.6L703.6 218.0L701.3 220.4L701.0 221.6L702.1 224.3L702.9 224.6L701.9 226.7L701.0 228.1L697.0 231.6L695.0 231.4L694.2 233.6L696.1 235.2L696.5 237.3L693.1 237.4Z"/>
<path fill="#c7e3c5" d="M710.7 230.2L712.3 230.5L717.1 232.2L719.4 233.5L723.5 233.9L723.4 231.6L720.2 231.4L716.3 229.5L713.1 227.6Z"/>
<path fill="#e1f0df" d="M724.6 232.5L726.2 233.3L729.7 233.2L729.7 231.7L726.2 231.1Z"/>
<path fill="#c7e3c5" d="M724.6 240.9L725.7 241.0L729.4 240.4L730.6 242.0L730.6 239.5L729.7 236.2L726.2 234.3L724.0 233.8L723.4 235.4L724.3 237.3Z"/>
<path fill="#c7e3c5" d="M710.4 263.0L710.7 260.1L712.8 262.2L713.7 264.2L713.1 265.8L711.5 266.3L710.6 264.9Z"/>
<path fill="#f2f9f1" d="M730.0 242.5L730.6 242.0L730.6 239.5L731.9 237.9L733.8 236.2L734.9 233.6L738.0 231.6L740.2 232.2L739.6 233.8L738.5 237.9L740.4 237.6L741.2 240.7L742.6 241.7L744.0 241.5L742.5 243.4L739.1 244.4L738.4 246.4L739.9 249.6L739.5 251.9L740.1 254.3L740.9 255.9L740.1 259.8L739.8 256.7L738.8 249.9L738.0 249.2L734.4 250.7L733.1 250.4L733.8 247.2L732.0 245.0Z"/>
<path fill="#9acf98" d="M739.1 244.4L742.5 243.4L744.2 244.8L743.9 247.8L745.5 247.4L747.0 246.7L749.7 248.1L751.1 251.0L750.5 253.0L746.6 253.8L746.2 256.3L743.9 255.6L742.3 254.5L741.0 257.5L741.5 259.5L742.9 263.8L745.3 265.3L743.2 265.3L739.6 262.8L740.1 259.8L740.9 255.9L740.1 254.3L739.5 251.9L739.9 249.6L738.4 246.4Z"/>
<path fill="#e1f0df" d="M742.5 243.4L744.0 241.5L745.8 240.3L746.6 241.4L748.6 242.5L749.4 243.7L749.2 245.5L752.6 248.8L754.1 251.1L754.1 252.7L751.6 253.7L751.1 251.0L749.7 248.1L747.0 246.7L745.5 247.4L743.9 247.8L744.2 244.8Z"/>
<path fill="#9acf98" d="M745.8 240.3L747.0 239.9L750.7 238.7L752.9 239.6L754.9 241.7L752.9 243.3L751.5 245.6L752.6 247.5L754.1 249.7L756.2 251.6L757.0 255.1L756.8 257.3L754.9 258.6L752.9 259.3L750.2 262.0L749.9 259.5L751.8 258.7L751.6 257.0L754.1 256.2L754.1 252.7L754.1 251.1L752.6 248.8L749.2 245.5L749.4 243.7L748.6 242.5L746.6 241.4Z"/>
<path fill="#e1f0df" d="M746.6 253.8L746.2 256.3L747.8 259.0L749.9 259.5L751.8 258.7L751.6 257.0L754.1 256.2L754.1 252.7L751.6 253.7L750.5 253.0Z"/>
<path fill="#5bab5a" d="M743.2 265.3L745.3 265.3L745.6 265.8L747.7 268.0L747.8 271.7L748.9 273.4L747.8 273.5L744.4 271.0L742.9 268.2L742.5 265.5Z"/>
<path fill="#c7e3c5" d="M756.5 276.4L756.8 273.5L757.4 272.4L759.7 273.1L762.8 270.6L764.4 268.5L766.8 267.4L768.8 264.7L770.2 266.0L772.3 267.4L771.0 268.8L769.9 270.1L770.5 272.8L772.3 274.2L769.9 275.6L769.9 277.2L768.3 279.5L767.5 281.8L765.2 281.3L762.8 280.3L760.4 280.3L758.4 280.2L758.1 278.0Z"/>
<path fill="#5bab5a" d="M757.4 272.4L759.7 273.1L762.8 270.6L764.4 268.5L766.8 267.4L768.8 264.7L770.2 266.0L772.3 267.4L771.0 268.8L769.9 269.0L766.8 270.1L765.2 273.2L761.2 273.2L757.4 273.7Z"/>
<path fill="#c7e3c5" d="M734.9 266.9L738.4 267.4L742.8 271.7L748.1 277.0L749.4 279.5L751.8 280.6L751.5 284.8L749.4 284.9L745.9 281.9L743.7 278.8L741.0 275.1L739.9 272.9L737.6 270.1Z"/>
<path fill="#c7e3c5" d="M750.5 286.3L751.8 285.1L755.7 285.9L758.9 286.5L762.0 286.5L765.3 287.8L765.0 289.3L759.7 288.5L756.0 287.9L752.4 287.3Z"/>
<path fill="#c7e3c5" d="M772.0 280.3L772.6 276.4L773.9 274.5L775.3 273.5L779.4 274.2L781.8 273.2L781.0 275.0L775.4 274.8L774.2 276.4L775.6 277.5L778.9 277.2L776.7 278.8L777.5 281.1L778.6 283.0L776.2 282.4L775.3 279.7L774.5 284.4L773.1 284.3L772.9 282.2Z"/>
<path fill="#c7e3c5" d="M766.0 288.5L767.5 289.6L770.7 289.5L772.3 289.2L775.4 288.9L778.6 288.7L778.6 289.2L773.9 289.8L769.1 290.0Z"/>
<path fill="#c7e3c5" d="M785.7 272.8L786.5 274.8L787.3 276.9L786.8 274.3L787.4 272.4Z"/>
<path fill="#c7e3c5" d="M783.3 280.5L785.2 280.8L786.8 281.1L784.6 281.8Z"/>
<path fill="#c7e3c5" d="M788.9 280.0L790.9 280.6L790.1 281.3L787.3 281.1Z"/>
<path fill="#c7e3c5" d="M791.2 277.8L792.8 276.2L796.0 277.2L797.5 280.8L802.1 278.0L807.0 279.7L807.0 290.0L803.8 288.4L802.3 288.9L801.6 287.3L803.5 286.3L802.3 284.3L797.5 282.4L794.4 281.9L792.8 280.0L791.5 278.8Z"/>
<path fill="#f2f9f1" d="M807.0 279.7L812.5 281.6L814.9 284.1L817.3 285.1L816.5 287.4L818.8 289.8L821.2 291.9L817.3 291.5L814.9 288.2L810.9 289.8L809.4 290.3L807.0 290.0Z"/>
<path fill="#f2f9f1" d="M821.2 284.3L824.4 282.2L825.1 283.5L822.8 285.4Z"/>
<path fill="#e1f0df" d="M780.2 290.3L781.9 289.0L785.4 288.9L781.8 290.6L780.2 291.5Z"/>
<path fill="#c7e3c5" d="M774.8 246.4L777.5 246.4L777.0 248.8L777.8 250.0L776.2 251.9L777.0 253.5L780.2 253.7L778.6 255.1L776.5 253.7L775.0 253.7L773.9 251.9L773.5 249.9Z"/>
<path fill="#c7e3c5" d="M777.0 264.6L779.4 263.3L782.5 260.1L784.0 262.2L783.6 265.7L782.2 266.8L780.2 265.3Z"/>
<path fill="#c7e3c5" d="M777.8 259.0L780.2 257.5L782.9 257.9L781.8 259.8L779.4 260.6L777.8 260.1Z"/>
<path fill="#c7e3c5" d="M769.4 262.3L773.1 257.9L773.4 259.0L769.9 263.0Z"/>
<path fill="#5bab5a" d="M791.1 221.5L793.6 219.7L798.3 219.3L800.4 216.7L803.1 216.0L805.4 212.8L805.4 210.6L807.8 210.4L808.4 213.3L807.0 215.3L806.8 217.4L806.7 219.4L805.1 220.5L803.5 220.8L800.7 221.0L797.8 222.3L797.1 220.8L794.4 221.3L792.0 221.9Z"/>
<path fill="#5bab5a" d="M789.0 222.9L791.2 222.1L792.8 223.5L791.7 226.1L790.0 226.2L789.3 224.3Z"/>
<path fill="#5bab5a" d="M793.7 222.1L797.1 221.8L796.4 223.2L794.4 223.8Z"/>
<path fill="#5bab5a" d="M805.4 210.1L805.1 208.4L807.8 204.1L809.4 205.5L813.8 205.7L814.1 207.4L810.9 209.3L807.0 208.5Z"/>
<path fill="#5bab5a" d="M783.5 216.1L787.1 214.7L788.7 217.2L788.7 219.6L788.1 220.4L785.7 221.0L783.8 221.3L784.1 218.8L784.3 216.9Z"/>
<path fill="#2a6d27" d="M763.1 316.6L763.8 314.3L764.5 310.0L768.7 308.1L771.5 307.6L775.4 306.4L777.3 304.0L777.8 302.1L779.5 301.2L781.0 299.7L783.6 297.7L785.7 297.7L786.8 299.7L788.9 299.3L789.8 296.4L790.9 295.2L793.7 294.7L793.7 293.4L796.0 294.4L799.0 294.9L800.5 295.0L800.1 296.4L798.3 299.3L800.7 300.8L804.2 303.2L806.5 303.2L807.8 299.3L807.9 295.5L809.4 292.5L810.9 296.0L811.1 298.0L813.8 299.3L814.7 302.4L815.4 305.6L819.3 307.6L820.4 310.8L822.5 311.3L823.1 313.5L825.9 315.5L826.9 320.6L825.9 324.5L825.1 326.9L823.1 329.1L821.2 334.0L818.0 335.2L815.4 337.1L812.8 335.6L810.9 336.8L807.8 336.0L804.9 334.3L804.6 332.1L802.4 331.8L803.1 329.6L801.9 327.7L801.5 330.0L799.0 330.4L797.7 327.7L796.0 326.9L791.5 325.3L786.8 325.6L782.5 326.9L779.5 329.1L773.9 329.1L770.7 330.8L767.5 330.8L766.0 329.6L767.1 326.6L766.0 322.2L764.5 318.2Z"/>
<path fill="#2a6d27" d="M812.7 339.8L815.7 340.5L818.5 340.1L818.5 342.2L816.8 343.8L814.9 344.4L813.6 342.2Z"/>
<path fill="#5bab5a" d="M857.0 329.9L859.5 331.9L861.4 333.7L862.2 334.9L865.9 334.9L865.2 337.5L863.6 337.9L862.5 339.7L861.0 341.2L860.0 340.8L860.7 338.6L858.8 337.5L860.0 336.4L860.2 334.1L858.3 331.6Z"/>
<path fill="#5bab5a" d="M856.9 339.5L859.5 341.1L858.8 342.5L857.0 344.4L854.7 345.7L854.0 348.0L852.1 349.1L847.2 348.2L850.2 345.3L853.5 343.5L855.6 341.1Z"/>
<path fill="#e1f0df" d="M843.3 307.5L848.0 310.8L847.2 310.6L843.8 308.1Z"/>
<path fill="#e1f0df" d="M864.3 303.2L866.2 302.9L866.2 304.3L864.3 304.2Z"/>
<path fill="#e1f0df" d="M832.2 287.4L837.0 289.5L838.6 291.1L835.4 290.6Z"/>
<path fill="#e1f0df" d="M848.0 299.3L849.3 300.1L848.8 301.6Z"/>
<path fill="#c7e3c5" d="M575.2 219.1L581.3 220.2L581.8 221.5L582.6 224.9L578.8 225.7L576.6 227.5L570.8 230.3L570.8 231.9L563.7 231.9L566.4 230.9L569.0 228.9L569.4 226.1L570.9 223.2L573.8 221.8Z"/>
<path fill="#e1f0df" d="M570.8 231.9L570.8 234.6L565.6 234.6L565.6 238.5L564.0 242.0L557.7 242.5L559.7 237.9L561.6 234.4L563.7 231.9Z"/>
<path fill="#c7e3c5" d="M581.3 220.2L586.1 218.0L589.2 217.5L594.8 217.1L598.1 217.4L597.6 221.0L596.3 222.7L599.5 225.1L600.0 227.8L599.5 233.0L600.8 236.9L603.4 238.5L593.7 244.8L591.1 245.5L589.5 245.6L586.4 242.8L576.9 236.2L570.8 232.5L570.8 230.3L576.6 227.5L578.8 225.7L582.6 224.9L581.8 221.5Z"/>
<path fill="#c7e3c5" d="M598.1 217.4L600.6 216.9L601.9 217.4L601.1 219.6L602.0 220.1L600.3 221.6L602.6 223.2L600.8 225.6L600.0 227.8L599.5 225.1L596.3 222.7L597.6 221.0Z"/>
<path fill="#c7e3c5" d="M602.6 223.2L605.3 223.7L608.5 224.6L609.3 226.1L613.7 227.8L616.1 226.8L615.9 225.1L616.8 224.3L619.2 223.7L621.0 224.2L624.0 225.7L624.0 240.9L624.0 244.0L622.4 244.0L622.4 244.8L609.7 238.5L606.9 239.9L603.4 238.5L600.8 236.9L599.5 233.0L600.0 227.8L600.8 225.6Z"/>
<path fill="#5bab5a" d="M624.0 225.7L627.6 226.2L631.7 226.4L635.0 226.4L638.5 226.2L639.7 229.0L638.6 231.7L635.9 228.4L637.4 232.5L640.5 237.7L642.7 240.9L634.2 240.9L624.0 240.9Z"/>
<path fill="#f2f9f1" d="M557.7 242.5L564.0 242.0L565.6 238.5L565.6 234.6L570.8 234.6L570.8 232.5L576.9 236.2L575.0 236.3L575.8 249.6L569.5 251.1L566.4 251.1L565.2 252.4L558.5 250.2L559.1 246.4L558.9 244.2Z"/>
<path fill="#e1f0df" d="M576.9 236.2L586.4 242.8L589.5 245.6L591.1 245.5L591.1 249.6L586.4 251.5L584.8 252.7L581.3 252.7L579.0 254.6L576.1 259.2L571.9 259.5L571.1 257.5L566.5 256.0L565.2 252.4L566.4 251.1L569.5 251.1L575.8 249.6L575.0 236.3Z"/>
<path fill="#e1f0df" d="M591.1 245.5L593.7 244.8L603.4 238.5L606.9 239.9L609.0 242.8L609.0 247.2L606.6 251.1L606.0 254.1L603.4 254.8L597.9 255.1L591.0 254.3L590.2 257.1L588.0 255.7L586.1 254.6L584.8 252.7L586.4 251.5L591.1 249.6Z"/>
<path fill="#f2f9f1" d="M606.9 239.9L609.7 238.5L622.4 244.8L622.4 250.8L620.0 253.5L619.2 255.4L621.7 259.8L619.2 261.4L614.2 261.7L609.0 263.8L608.6 260.0L606.6 260.5L608.2 256.7L606.6 255.1L606.0 254.1L606.6 251.1L609.0 247.2L609.0 242.8Z"/>
<path fill="#c7e3c5" d="M622.4 244.8L622.4 244.0L624.0 244.0L624.0 240.9L634.2 240.9L642.7 240.9L643.4 246.4L645.4 247.4L642.1 253.0L641.6 255.6L639.6 258.7L638.2 260.6L638.0 263.0L639.7 267.4L641.2 268.3L638.2 269.0L637.4 269.8L633.4 269.8L631.8 268.5L627.9 267.7L624.7 264.6L622.4 262.2L621.7 259.8L619.2 255.4L620.0 253.5L622.4 250.8Z"/>
<path fill="#c7e3c5" d="M642.1 253.0L645.4 247.4L646.5 250.5L647.8 252.1L649.5 253.7L651.4 255.9L652.5 255.6L652.2 258.4L653.9 261.4L659.9 263.0L655.4 267.9L652.4 267.9L650.6 269.4L649.2 269.1L647.5 269.6L645.3 269.9L641.5 268.7L641.2 268.3L639.7 267.4L638.0 263.0L638.2 260.6L639.6 258.7L641.6 255.6Z"/>
<path fill="#f2f9f1" d="M652.2 258.4L654.9 259.2L658.7 258.1L661.8 257.8L665.5 257.0L665.1 259.0L664.8 260.6L662.6 265.0L660.2 268.5L657.9 271.7L654.4 273.7L651.7 276.5L649.2 278.1L649.2 271.2L650.6 269.4L652.4 267.9L655.4 267.9L659.9 263.0L653.9 261.4Z"/>
<path fill="#c7e3c5" d="M649.2 278.1L647.8 280.8L646.4 283.0L644.0 281.4L638.0 277.2L638.2 273.7L639.7 272.6L638.2 269.0L641.2 268.3L641.5 268.7L645.3 269.9L647.5 269.6L649.2 269.1L650.6 269.4L649.2 271.2Z"/>
<path fill="#c7e3c5" d="M646.4 283.0L646.5 286.3L646.8 288.2L648.3 291.9L644.5 293.3L640.5 293.9L639.1 293.7L638.2 290.6L636.6 290.4L633.4 289.2L632.6 287.4L631.1 285.1L631.7 282.7L632.9 280.8L632.6 277.3L638.0 277.2L644.0 281.4Z"/>
<path fill="#c7e3c5" d="M631.2 277.8L632.6 277.3L638.0 277.2L638.2 273.7L639.7 272.6L638.2 269.0L637.4 269.8L633.4 269.8L633.1 270.1L631.4 274.7Z"/>
<path fill="#e1f0df" d="M631.2 277.8L632.6 277.3L632.9 280.8L631.7 282.7L630.3 282.5L630.3 279.9Z"/>
<path fill="#c7e3c5" d="M603.9 285.2L605.0 284.8L610.5 284.9L612.4 288.2L614.5 288.1L618.9 287.1L619.2 291.1L622.1 293.0L624.7 294.2L627.4 293.9L629.5 295.6L631.5 294.9L631.1 296.1L630.3 289.0L632.6 287.4L631.1 285.1L631.7 282.7L630.3 282.5L630.3 279.9L631.2 277.8L631.4 274.7L633.1 270.1L631.8 268.5L627.9 267.7L624.7 267.2L620.8 268.5L619.8 269.3L616.8 268.7L613.9 270.1L612.1 273.2L609.7 277.2L608.2 282.5L606.6 282.9L604.2 285.1Z"/>
<path fill="#f2f9f1" d="M607.2 265.8L609.0 263.8L614.2 261.7L619.2 261.4L621.7 259.8L622.4 262.2L624.7 264.6L627.9 267.7L624.7 267.2L620.8 268.5L619.8 269.3L616.8 268.7L613.9 270.1L609.9 272.1L608.2 269.4Z"/>
<path fill="#c7e3c5" d="M597.9 268.2L598.7 269.4L599.6 270.9L600.0 272.0L602.3 272.1L609.9 272.1L608.2 269.4L607.2 265.8L609.0 263.8L608.6 260.0L606.6 260.5L608.2 256.7L606.6 255.1L606.9 255.9L605.0 260.8L603.4 264.6L601.1 264.7L599.5 266.1Z"/>
<path fill="#e1f0df" d="M600.0 272.0L602.3 272.1L609.9 272.1L613.9 270.1L612.1 273.2L609.7 277.2L608.2 282.5L606.6 282.9L604.2 285.1L603.8 284.0L602.0 281.8L599.2 277.2L599.5 274.0Z"/>
<path fill="#9acf98" d="M588.8 265.7L591.6 265.7L593.8 268.8L595.5 268.7L597.9 268.2L599.5 266.1L601.1 264.7L603.4 264.6L605.0 260.8L606.9 255.9L606.6 255.1L603.4 254.8L597.9 255.1L591.0 254.3L590.2 257.1L588.8 261.4Z"/>
<path fill="#c7e3c5" d="M558.5 250.2L565.2 252.4L566.5 256.0L562.9 255.7L558.1 256.0L557.5 252.9Z"/>
<path fill="#e1f0df" d="M558.1 256.0L562.9 255.7L566.5 256.0L571.1 257.5L571.9 259.5L572.7 262.3L571.1 263.6L572.7 268.7L569.5 267.1L566.4 264.7L563.5 262.2L563.0 260.1L560.8 258.4Z"/>
<path fill="#c7e3c5" d="M572.7 268.7L578.2 267.4L581.3 268.2L582.9 267.7L586.1 266.1L588.8 265.7L588.8 261.4L590.2 257.1L588.0 255.7L586.1 254.6L584.8 252.7L581.3 252.7L579.0 254.6L576.1 259.2L571.9 259.5L572.7 262.3L571.1 263.6Z"/>
<path fill="#e1f0df" d="M576.1 259.2L579.8 260.0L584.5 258.2L588.0 257.5L588.0 255.7L586.1 254.6L584.8 252.7L581.3 252.7L579.0 254.6Z"/>
<path fill="#f2f9f1" d="M603.9 285.2L605.3 289.8L606.0 294.5L603.6 298.5L603.1 302.9L605.8 302.4L613.7 303.1L617.3 304.0L621.1 303.2L619.2 301.2L619.2 296.1L622.4 296.1L622.1 293.0L619.2 291.1L618.9 287.1L614.5 288.1L612.4 288.2L610.5 284.9Z"/>
<path fill="#e1f0df" d="M603.1 302.9L605.3 307.2L607.4 311.6L608.5 318.2L610.5 320.7L616.1 320.4L616.1 314.7L616.1 310.3L617.6 310.3L617.6 304.5L621.3 303.8L624.4 303.7L621.1 303.2L617.3 304.0L613.7 303.1L605.8 302.4Z"/>
<path fill="#5bab5a" d="M610.5 320.7L611.8 323.3L613.4 326.9L613.5 329.6L616.1 330.5L620.0 329.1L624.0 329.1L626.3 328.9L628.7 327.2L631.8 325.0L633.4 322.8L635.6 320.7L636.4 319.0L635.0 317.9L633.9 316.2L634.8 314.1L634.2 310.8L630.9 310.6L627.1 313.3L624.7 316.2L620.8 315.5L616.1 314.7L616.1 320.4Z"/>
<path fill="#e1f0df" d="M627.1 322.2L629.0 320.7L630.9 322.0L629.5 323.9L627.7 323.3Z"/>
<path fill="#c7e3c5" d="M616.1 310.3L616.1 314.7L620.8 315.5L624.7 316.2L627.1 313.3L630.9 310.6L628.7 309.5L625.5 304.0L624.4 303.7L621.3 303.8L617.6 304.5L617.6 310.3Z"/>
<path fill="#c7e3c5" d="M624.4 303.7L625.5 304.0L628.7 309.5L630.9 310.6L634.2 310.8L635.8 307.9L636.4 305.3L636.4 301.6L632.5 300.2L628.7 301.6L627.1 303.8Z"/>
<path fill="#c7e3c5" d="M619.2 296.1L619.2 301.2L621.1 303.2L624.4 303.7L627.1 303.8L628.7 301.6L632.5 300.2L632.2 298.6L636.9 297.7L636.1 295.3L637.0 292.6L636.6 290.4L633.4 289.2L630.3 289.0L631.1 296.1L629.5 295.6L627.4 293.9L624.7 294.2L622.1 293.0L622.4 296.1Z"/>
<path fill="#c7e3c5" d="M648.3 291.9L648.4 294.5L648.6 299.0L646.8 301.5L643.4 303.5L640.5 306.4L640.5 310.0L640.4 313.5L636.3 316.5L635.0 317.9L634.8 314.1L634.2 310.8L635.8 307.9L636.4 305.3L636.4 301.6L632.5 300.2L632.2 298.6L636.9 297.7L638.9 298.5L640.2 301.6L640.5 297.7L639.1 293.7L640.5 293.9L644.5 293.3Z"/>
<path fill="#e1f0df" d="M637.0 292.6L636.1 295.3L636.9 297.7L638.9 298.5L640.2 301.6L640.5 297.7L639.1 293.7L638.2 290.6L636.6 290.4Z"/>
<path fill="#e1f0df" d="M662.3 294.5L664.0 300.1L663.1 302.4L661.3 307.9L659.1 314.7L656.0 315.8L653.5 312.7L652.8 309.5L654.6 306.4L653.9 302.4L657.4 300.4L659.9 298.5L661.7 296.4Z"/>
<path fill="#e1f0df" d="M674.9 307.2L675.7 307.5L675.2 307.9Z"/>
</g>
<g fill="#003f00"><rect x="293.1" y="133.8" width="16.2" height="48" rx="8.1"/><rect x="284.7" y="149.7" width="33" height="16.6" rx="8.3"/><rect x="293.1" y="186.7" width="16.2" height="48" rx="8.1"/></g>
<g fill="#f4f4f4"><path d="M301.2 137.6 L296.5 145.8 L305.9 145.8Z"/><path d="M296.5 170 L305.9 170 L301.2 178.3Z"/><path d="M288.2 158 L296.5 153 L296.5 163Z"/><path d="M305.9 153 L314.2 158 L305.9 163Z"/></g>
<g stroke="#f4f4f4" stroke-width="1.8"><path d="M296.8 195.9 H305.6"/><path d="M301.2 191.5 V200.3"/><path d="M296.8 226.1 H305.6"/></g>
<g fill="none" stroke="#8f8fe6" stroke-width="0.8"><circle cx="301.2" cy="210.8" r="7.2"/><ellipse cx="301.2" cy="210.8" rx="3.6" ry="7.2"/><path d="M301.2 203.6 V218 M294 210.8 H308.4 M295.2 207.2 H307.2 M295.2 214.4 H307.2"/></g>
</svg>
<div class="r" style="left:277px;top:424px;width:136px;height:18px;background:linear-gradient(to right,#ffffff 0%,#b9dab9 30%,#6aaa6a 55%,#1f8a1f 75%,#007000 88%,#004800 100%)"></div>
<div class="t" style="left:278.20px;top:423.00px;font-size:10.4px;line-height:16px;color:#111">0</div>
<div class="t" style="left:359.50px;top:423.00px;font-size:10.4px;line-height:16px;color:#111">75,196</div>
<div class="r" style="left:269px;top:451px;width:644px;height:1px;background:#d9d9d9"></div>
<div class="t" style="left:287.50px;top:458.37px;font-size:12.5px;line-height:16px;font-weight:bold;color:#333">Report View by Selection</div>
<div class="t" style="left:830.00px;top:458.57px;font-size:12.5px;line-height:16px;font-weight:bold;color:#0b5d87">Customize</div>
<div class="r" style="left:269px;top:483px;width:644px;height:1px;background:#d4d4d4"></div>
<div class="r" style="left:269px;top:484px;width:639px;height:34px;background:#f4f4f4"></div>
<div class="t" style="left:281.50px;top:485.90px;font-size:12.4px;line-height:16px;font-weight:bold;color:#333">Total:</div>
<div class="t" style="left:289.50px;top:499.00px;font-size:12.4px;line-height:16px;font-weight:bold;color:#333">6</div>
<div class="t" style="left:342.00px;top:491.70px;font-size:12.4px;line-height:16px;font-weight:bold;color:#333">Research Fields</div>
<div class="t" style="left:464.00px;top:485.63px;font-size:12.6px;line-height:16px;font-weight:bold;color:#333">Web of Science</div>
<div class="t" style="left:471.00px;top:499.40px;font-size:12.7px;line-height:16px;font-weight:bold;color:#333">Documents</div>
<div class="t" style="left:591.80px;top:491.30px;font-size:12.4px;line-height:16px;font-weight:bold;color:#4d77aa">Cites</div>
<svg class="r" style="left:625px;top:498px" width="9" height="4" viewBox="0 0 9 4"><path d="M0.5 0 L8 0 L4.25 3.5 Z" fill="#5d93d3"/></svg>
<div class="t" style="left:681.00px;top:491.30px;font-size:12.4px;line-height:16px;font-weight:bold;color:#333">Cites/Paper</div>
<div class="t" style="left:802.30px;top:491.10px;font-size:12.4px;line-height:16px;font-weight:bold;color:#333">Top Papers</div>
<div class="r" style="left:269px;top:518px;width:639px;height:29px;background:#fafafa"></div>
<div class="r" style="left:269px;top:547px;width:639px;height:1px;background:#e6e6e6"></div>
<div class="t" style="right:636.70px;top:523.04px;font-size:12px;line-height:16px;color:#333">1</div>
<div class="t" style="left:342.00px;top:516.59px;font-size:12.45px;line-height:16px;font-weight:bold;color:#125e88">PLANT &amp; ANIMAL</div>
<div class="t" style="left:342.00px;top:529.09px;font-size:12.45px;line-height:16px;font-weight:bold;color:#125e88">SCIENCE</div>
<div class="t" style="right:396.00px;top:523.04px;font-size:12px;line-height:16px;color:#333">1,564</div>
<div class="t" style="right:295.50px;top:523.04px;font-size:12px;line-height:16px;color:#333">18,398</div>
<div class="t" style="right:190.20px;top:523.04px;font-size:12px;line-height:16px;color:#333">11.76</div>
<div class="r" style="left:813px;top:524px;width:90px;height:16px;background:#dfe7f3;border:1px solid #5b8fd5"></div>
<div class="r" style="left:814px;top:525px;width:88px;height:14px;background:linear-gradient(#aac7ee 0%,#9fc0ec 40%,#6d9fe0 50%,#6a9ce0 100%)"></div>
<div class="r" style="left:814px;top:525px;width:88px;height:14px;overflow:hidden"><div class="t" style="left:76.6px;top:-1px;font-size:12px;line-height:16px;color:#fff">25</div></div>
<div class="r" style="left:269px;top:548px;width:639px;height:30px;background:#fafafa"></div>
<div class="r" style="left:269px;top:578px;width:639px;height:1px;background:#e6e6e6"></div>
<div class="t" style="right:636.70px;top:553.54px;font-size:12px;line-height:16px;color:#333">2</div>
<div class="t" style="left:342.00px;top:547.09px;font-size:12.45px;line-height:16px;font-weight:bold;color:#125e88">AGRICULTURAL</div>
<div class="t" style="left:342.00px;top:559.59px;font-size:12.45px;line-height:16px;font-weight:bold;color:#125e88">SCIENCES</div>
<div class="t" style="right:396.00px;top:553.54px;font-size:12px;line-height:16px;color:#333">1,163</div>
<div class="t" style="right:295.50px;top:553.54px;font-size:12px;line-height:16px;color:#333">16,430</div>
<div class="t" style="right:190.20px;top:553.54px;font-size:12px;line-height:16px;color:#333">14.13</div>
<div class="r" style="left:813px;top:555px;width:90px;height:16px;background:#dfe7f3;border:1px solid #5b8fd5"></div>
<div class="r" style="left:814px;top:556px;width:81px;height:14px;background:linear-gradient(#aac7ee 0%,#9fc0ec 40%,#6d9fe0 50%,#6a9ce0 100%)"></div>
<div class="r" style="left:814px;top:556px;width:81px;height:14px;overflow:hidden"><div class="t" style="left:76.6px;top:-1px;font-size:12px;line-height:16px;color:#fff">23</div></div>
<div class="r" style="left:895px;top:556px;width:7px;height:14px;overflow:hidden"><div class="t" style="left:-4.4px;top:-1px;font-size:12px;line-height:16px;color:#56688a">23</div></div>
<div class="r" style="left:269px;top:579px;width:639px;height:22px;background:#fafafa"></div>
<div class="r" style="left:269px;top:601px;width:639px;height:1px;background:#e6e6e6"></div>
<div class="t" style="right:636.70px;top:580.54px;font-size:12px;line-height:16px;color:#333">3</div>
<div class="t" style="left:342.00px;top:580.39px;font-size:12.45px;line-height:16px;font-weight:bold;color:#125e88">CHEMISTRY</div>
<div class="t" style="right:396.00px;top:580.54px;font-size:12px;line-height:16px;color:#333">684</div>
<div class="t" style="right:295.50px;top:580.54px;font-size:12px;line-height:16px;color:#333">11,096</div>
<div class="t" style="right:190.20px;top:580.54px;font-size:12px;line-height:16px;color:#333">16.22</div>
<div class="r" style="left:813px;top:582px;width:90px;height:16px;background:#dfe7f3;border:1px solid #5b8fd5"></div>
<div class="r" style="left:814px;top:583px;width:32px;height:14px;background:linear-gradient(#aac7ee 0%,#9fc0ec 40%,#6d9fe0 50%,#6a9ce0 100%)"></div>
<div class="r" style="left:814px;top:583px;width:32px;height:14px;overflow:hidden"><div class="t" style="left:76.6px;top:-1px;font-size:12px;line-height:16px;color:#fff">9</div></div>
<div class="r" style="left:846px;top:583px;width:56px;height:14px;overflow:hidden"><div class="t" style="left:51.3px;top:-1px;font-size:12px;line-height:16px;color:#56688a">9</div></div>
<div class="r" style="left:269px;top:602px;width:639px;height:30px;background:#fafafa"></div>
<div class="r" style="left:269px;top:632px;width:639px;height:1px;background:#e6e6e6"></div>
<div class="t" style="right:636.70px;top:607.54px;font-size:12px;line-height:16px;color:#333">4</div>
<div class="t" style="left:342.00px;top:601.09px;font-size:12.45px;line-height:16px;font-weight:bold;color:#125e88">ENVIRONMENT/E</div>
<div class="t" style="left:342.00px;top:613.59px;font-size:12.45px;line-height:16px;font-weight:bold;color:#125e88">COLOGY</div>
<div class="t" style="right:396.00px;top:607.54px;font-size:12px;line-height:16px;color:#333">528</div>
<div class="t" style="right:295.50px;top:607.54px;font-size:12px;line-height:16px;color:#333">7,031</div>
<div class="t" style="right:190.20px;top:607.54px;font-size:12px;line-height:16px;color:#333">13.32</div>
<div class="r" style="left:813px;top:609px;width:90px;height:16px;background:#dfe7f3;border:1px solid #5b8fd5"></div>
<div class="r" style="left:814px;top:610px;width:25px;height:14px;background:linear-gradient(#aac7ee 0%,#9fc0ec 40%,#6d9fe0 50%,#6a9ce0 100%)"></div>
<div class="r" style="left:814px;top:610px;width:25px;height:14px;overflow:hidden"><div class="t" style="left:76.6px;top:-1px;font-size:12px;line-height:16px;color:#fff">7</div></div>
<div class="r" style="left:839px;top:610px;width:63px;height:14px;overflow:hidden"><div class="t" style="left:58.3px;top:-1px;font-size:12px;line-height:16px;color:#56688a">7</div></div>
<div class="r" style="left:269px;top:633px;width:639px;height:23px;background:#fafafa"></div>
<div class="r" style="left:269px;top:656px;width:639px;height:1px;background:#e6e6e6"></div>
<div class="t" style="right:636.70px;top:635.04px;font-size:12px;line-height:16px;color:#333">5</div>
<div class="t" style="left:342.00px;top:634.89px;font-size:12.45px;line-height:16px;font-weight:bold;color:#125e88">ENGINEERING</div>
<div class="t" style="right:396.00px;top:635.04px;font-size:12px;line-height:16px;color:#333">291</div>
<div class="t" style="right:295.50px;top:635.04px;font-size:12px;line-height:16px;color:#333">3,647</div>
<div class="t" style="right:190.20px;top:635.04px;font-size:12px;line-height:16px;color:#333">12.53</div>
<div class="r" style="left:813px;top:636px;width:90px;height:16px;background:#dfe7f3;border:1px solid #5b8fd5"></div>
<div class="r" style="left:814px;top:637px;width:28px;height:14px;background:linear-gradient(#aac7ee 0%,#9fc0ec 40%,#6d9fe0 50%,#6a9ce0 100%)"></div>
<div class="r" style="left:814px;top:637px;width:28px;height:14px;overflow:hidden"><div class="t" style="left:76.6px;top:-1px;font-size:12px;line-height:16px;color:#fff">8</div></div>
<div class="r" style="left:842px;top:637px;width:60px;height:14px;overflow:hidden"><div class="t" style="left:55.3px;top:-1px;font-size:12px;line-height:16px;color:#56688a">8</div></div>
<div class="r" style="left:269px;top:657px;width:639px;height:22px;background:#fafafa"></div>
<div class="r" style="left:269px;top:679px;width:639px;height:1px;background:#e6e6e6"></div>
<div class="t" style="right:636.70px;top:658.54px;font-size:12px;line-height:16px;color:#333">0</div>
<div class="t" style="left:342.00px;top:658.39px;font-size:12.45px;line-height:16px;font-weight:bold;color:#125e88">ALL FIELDS</div>
<div class="t" style="right:396.00px;top:658.54px;font-size:12px;line-height:16px;color:#333">6,160</div>
<div class="t" style="right:295.50px;top:658.54px;font-size:12px;line-height:16px;color:#333">81,173</div>
<div class="t" style="right:190.20px;top:658.54px;font-size:12px;line-height:16px;color:#333">13.18</div>
<div class="r" style="left:813px;top:660px;width:90px;height:16px;background:#dfe7f3;border:1px solid #5b8fd5"></div>
<div class="r" style="left:814px;top:661px;width:88px;height:14px;background:linear-gradient(#aac7ee 0%,#9fc0ec 40%,#6d9fe0 50%,#6a9ce0 100%)"></div>
<div class="r" style="left:814px;top:661px;width:88px;height:14px;overflow:hidden"><div class="t" style="left:76.6px;top:-1px;font-size:12px;line-height:16px;color:#fff">81</div></div>
<div class="t" style="right:44.50px;top:855.09px;font-size:11px;line-height:16px;font-style:italic;color:#1c1c1c;letter-spacing:-0.1px">InCites Essential Science Indicators dataset updated May 11, 2023.</div>
<div class="t" style="right:44.50px;top:869.19px;font-size:11px;line-height:16px;font-style:italic;color:#1c1c1c;letter-spacing:-0.1px">For more information <span style="color:#1f6c9c">Click Here</span></div>
</body></html>
